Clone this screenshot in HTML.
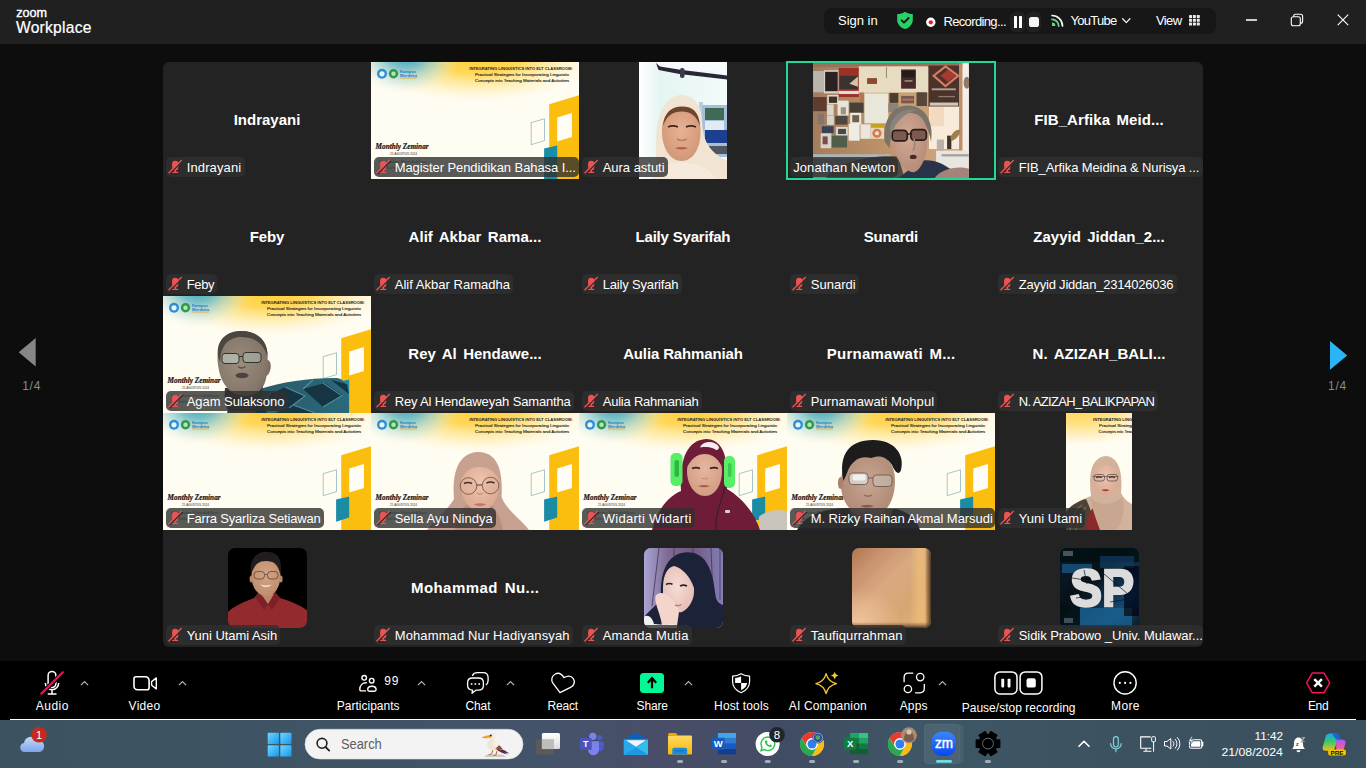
<!DOCTYPE html>
<html lang="en"><head><meta charset="utf-8"><title>Zoom Workplace</title>
<style>
*{box-sizing:border-box;margin:0;padding:0}
html,body{width:1366px;height:768px;overflow:hidden;background:#0d0d0d}
body{position:relative;font-family:"Liberation Sans",sans-serif;color:#fff;-webkit-font-smoothing:antialiased}
.abs{position:absolute}
svg{display:block;position:absolute;overflow:visible}
#topbar{position:absolute;left:0;top:0;width:1366px;height:44px;background:#202020}
#pill{position:absolute;left:824px;top:8px;width:392px;height:26px;border-radius:8px;background:#171717}
.t13{position:absolute;font-size:13px;line-height:16px;white-space:pre;color:#fff}
#grid{position:absolute;left:163px;top:62px;width:1040px;height:585px;background:#232323;border-radius:6px;overflow:hidden}
.tile{position:absolute;width:208px;height:117px;overflow:hidden}
.nm{position:absolute;left:0;width:208px;top:47px;height:22px;line-height:22px;text-align:center;font-weight:700;font-size:15px;white-space:pre;color:#fff}
.lb{position:absolute;left:3px;top:95.300px;height:20px;border-radius:5px;background:rgba(47,47,47,.8);font-size:13px;line-height:22px;white-space:pre;color:#fff;padding-left:20.700px;overflow:hidden}
.lb.nomic{padding-left:3.300px}
.lb svg{left:2px;top:2px}
.vid{position:absolute;top:0;height:117px;overflow:hidden}
.av{position:absolute;left:64.500px;top:18.400px;width:79.600px;height:79.600px;border-radius:7px;overflow:hidden}
#tb{position:absolute;left:0;top:661px;width:1366px;height:59px;background:#000}
.tl{position:absolute;top:40px;font-size:12.5px;line-height:14px;white-space:pre;color:#fff;transform:translateX(-50%)}
#wl{position:absolute;left:9.800px;top:718.800px;width:1346.400px;height:1.400px;background:#fff}
#task{position:absolute;left:0;top:720px;width:1366px;height:48px;background:#435865}
.ind{position:absolute;top:40px;width:6px;height:3px;border-radius:2px;background:#a9b2b8}
</style></head><body>
<svg width="0" height="0" style="position:absolute"><defs><filter id="pb" x="-5%" y="-5%" width="110%" height="110%"><feGaussianBlur stdDeviation=".55"/></filter><filter id="pb2" x="-5%" y="-5%" width="110%" height="110%"><feGaussianBlur stdDeviation=".35"/></filter></defs></svg>
<div id="topbar">
<div class="abs" style="left:16.2px;top:4.73px;font-size:12.6px;line-height:16px;font-weight:400;white-space:pre;color:#fff;letter-spacing:0.035px;-webkit-text-stroke:.4px #fff;">zoom</div>
<div class="abs" style="left:16px;top:19.19px;font-size:15.6px;line-height:18px;font-weight:400;white-space:pre;color:#fff;letter-spacing:0.249px;-webkit-text-stroke:.2px #fff;">Workplace</div>
<div id="pill"></div>
<div class="abs" style="left:838px;top:13.3px;font-size:13px;line-height:16px;font-weight:400;white-space:pre;color:#fff;letter-spacing:-0.009px;">Sign in</div>
<svg style="left:896px;top:11px" width="18" height="19" viewBox="0 0 18 19"><path d="M9 .7 C6.8 2.3 4 3.1 1.2 3.1 V9 c0 4.3 3.2 7.6 7.8 9.1 4.6-1.5 7.800-4.800 7.800-9.100 V3.100 C14 3.100 11.200 2.300 9 .7z" fill="#27d168"/><path d="M5.600 9.300 8 11.700 12.600 7" fill="none" stroke="#111" stroke-width="1.800" stroke-linecap="round" stroke-linejoin="round"/></svg>
<svg style="left:925px;top:16px" width="12" height="12" viewBox="0 0 12 12"><circle cx="5.800" cy="6.300" r="4.700" fill="#fff"/><circle cx="5.800" cy="6.300" r="2.100" fill="#e8173d"/></svg>
<div class="abs" style="left:943.4px;top:14.100000000000001px;font-size:13px;line-height:16px;font-weight:400;white-space:pre;color:#fff;letter-spacing:-0.634px;">Recording...</div>
<div class="abs" style="left:1010.300px;top:12px;width:14.800px;height:19.700px;border-radius:5px;background:#212121"></div>
<div class="abs" style="left:1026.300px;top:12px;width:15.200px;height:19.700px;border-radius:5px;background:#212121"></div>
<div class="abs" style="left:1013.700px;top:16px;width:3.400px;height:11.800px;background:#fff;border-radius:.6px"></div>
<div class="abs" style="left:1019px;top:16px;width:3.400px;height:11.800px;background:#fff;border-radius:.6px"></div>
<div class="abs" style="left:1029px;top:16.800px;width:10.200px;height:10.200px;background:#f6f6f8;border-radius:2.600px"></div>
<svg style="left:1051px;top:14px" width="13" height="13" viewBox="0 0 13 13"><path d="M1 1.500 A10.500 10.500 0 0 1 11.500 12" fill="none" stroke="#f2f2f2" stroke-width="1.700" stroke-linecap="round"/><path d="M1 5.300 A6.700 6.700 0 0 1 7.700 12" fill="none" stroke="#6fd08c" stroke-width="1.800" stroke-linecap="round"/><path d="M1 8.600 A3.400 3.400 0 0 1 4.400 12 L1 12z" fill="#6fd08c"/></svg>
<div class="abs" style="left:1070.4px;top:12.5px;font-size:13px;line-height:16px;font-weight:400;white-space:pre;color:#fff;letter-spacing:-0.715px;">YouTube</div>
<svg style="left:1122px;top:17.500px" width="9" height="6" viewBox="0 0 9 6"><path d="M.7.8 4.300 4.600 7.900.8" fill="none" stroke="#f0f0f0" stroke-width="1.300" stroke-linecap="round" stroke-linejoin="round"/></svg>
<div class="abs" style="left:1155.9px;top:12.5px;font-size:13px;line-height:16px;font-weight:400;white-space:pre;color:#fff;letter-spacing:-0.566px;">View</div>
<svg style="left:1188.700px;top:14.800px" width="11" height="11" viewBox="0 0 11 11"><rect x="0.0" y="0.0" width="3" height="3" rx=".6" fill="#e9e9e9"/><rect x="3.9" y="0.0" width="3" height="3" rx=".6" fill="#e9e9e9"/><rect x="7.8" y="0.0" width="3" height="3" rx=".6" fill="#e9e9e9"/><rect x="0.0" y="3.8" width="3" height="3" rx=".6" fill="#e9e9e9"/><rect x="3.9" y="3.8" width="3" height="3" rx=".6" fill="#e9e9e9"/><rect x="7.8" y="3.8" width="3" height="3" rx=".6" fill="#e9e9e9"/><rect x="0.0" y="7.6" width="3" height="3" rx=".6" fill="#e9e9e9"/><rect x="3.9" y="7.6" width="3" height="3" rx=".6" fill="#e9e9e9"/><rect x="7.8" y="7.6" width="3" height="3" rx=".6" fill="#e9e9e9"/></svg>
<div class="abs" style="left:1245.500px;top:19.200px;width:11px;height:1.700px;background:#cdcdcd"></div>
<svg style="left:1290px;top:13px" width="14" height="14" viewBox="0 0 14 14"><rect x="3.600" y="1.300" width="9" height="9" rx="2" fill="none" stroke="#fff" stroke-width="1.100"/><rect x="1.300" y="3.700" width="9" height="9" rx="2" fill="#202020" stroke="#fff" stroke-width="1.100"/></svg>
<svg style="left:1337px;top:14px" width="12" height="12" viewBox="0 0 12 12"><path d="M.7.700 11.200 11.200M11.200.7.700 11.200" stroke="#fff" stroke-width="1.100" fill="none"/></svg>
</div>
<div id="grid">
<div class="tile" style="left:0px;top:0px;"><div class="nm" style="letter-spacing:0.007px;text-indent:0.007px;">Indrayani</div><div class="lb" style="letter-spacing:0.134px;padding-right:3.200px;"><svg width="20" height="20" viewBox="0 0 20 20" style="left:0;top:0"><path d="M6.100 6.800a3.100 3.100 0 0 1 6.200 0v3.200a3.100 3.600 0 0 1-6.200 0z" fill="#f05252"/><path d="M9.200 13v2M6.200 15.400h6" stroke="#f05252" stroke-width="1.400" fill="none"/><path d="M3.500 17.100 16.700 4" stroke="#2d2d2d" stroke-width="1.400"/><path d="M2.500 16.200 15.700 3.100" stroke="#f05252" stroke-width="1.350"/></svg>Indrayani</div></div>
<div class="tile" style="left:208px;top:0px;"><svg width="208" height="117" viewBox="0 0 208 117" style="left:0px;top:0"><defs><radialGradient id="t1" cx="0" cy="0" r="1" gradientUnits="userSpaceOnUse" gradientTransform="translate(35 -8) scale(54 40)"><stop offset="0" stop-color="#2f9dc0" stop-opacity="1"/><stop offset=".35" stop-color="#63b9cc" stop-opacity=".85"/><stop offset=".7" stop-color="#b4dcdc" stop-opacity=".5"/><stop offset="1" stop-color="#e6f2e8" stop-opacity="0"/></radialGradient><radialGradient id="y1" cx="0" cy="0" r="1" gradientUnits="userSpaceOnUse" gradientTransform="translate(106 -7) scale(118 47)"><stop offset="0" stop-color="#ffcd34" stop-opacity="1"/><stop offset=".4" stop-color="#ffd652" stop-opacity=".95"/><stop offset=".72" stop-color="#ffe898" stop-opacity=".55"/><stop offset="1" stop-color="#fff4cc" stop-opacity="0"/></radialGradient></defs><rect width="208" height="117" fill="#fffcf1"/><rect width="208" height="60" fill="url(#y1)"/><rect width="120" height="50" fill="url(#t1)"/><polygon points="178.200,42.300 208,33.300 208,117 178.200,117" fill="#fcbe0e"/><polygon points="186.200,55.500 200.900,51.100 200.900,75 186.200,79.500" fill="#fffef6"/><polygon points="173.100,86.600 186.200,83.400 186.200,117 173.100,117" fill="#1b8ca6"/><polygon points="160.200,60.600 173.500,56.800 173.500,78.600 160.200,82.700" fill="none" stroke="#5f9aa6" stroke-width=".55"/><circle cx="11" cy="11.800" r="5" fill="#2a8fd6"/><circle cx="11" cy="11.800" r="2.600" fill="#e8f3fb"/><circle cx="22.500" cy="11.800" r="4.700" fill="#2f9a4d"/><circle cx="22.500" cy="11.800" r="2.200" fill="#bfe0b0"/><text x="29" y="11" font-family="Liberation Sans,sans-serif" font-weight="700" font-size="3.600" fill="#1d7fc4" textLength="16" lengthAdjust="spacingAndGlyphs">Kampus</text><text x="29" y="14.600" font-family="Liberation Sans,sans-serif" font-weight="700" font-size="3.600" fill="#1d7fc4" textLength="17" lengthAdjust="spacingAndGlyphs">Merdeka</text><rect x="29" y="15.600" width="17" height=".8" fill="#f0a020"/><g font-family="Liberation Sans,sans-serif" fill="#222" text-anchor="middle"><text x="150" y="7.700" font-size="3.700" font-weight="700" textLength="103.500" lengthAdjust="spacingAndGlyphs">INTEGRATING LINGUISTICS INTO ELT CLASSROOM:</text><text x="151" y="14" font-size="4" stroke="#222" stroke-width=".12" textLength="94" lengthAdjust="spacingAndGlyphs">Practical Strategies for Incorporating Linguistic</text><text x="151" y="19.700" font-size="4" stroke="#222" stroke-width=".12" textLength="94" lengthAdjust="spacingAndGlyphs">Concepts into Teaching Materials and Activities</text></g><text x="4.600" y="87" font-family="Liberation Serif,serif" font-style="italic" font-weight="700" font-size="7.500" fill="#151515" stroke="#151515" stroke-width=".22" textLength="53" lengthAdjust="spacingAndGlyphs">Monthly Zeminar</text><text x="32.500" y="93.200" text-anchor="middle" font-family="Liberation Sans,sans-serif" font-size="2.800" fill="#333" textLength="27" lengthAdjust="spacingAndGlyphs">21 AGUSTUS 2024</text><g font-family="Liberation Sans,sans-serif" font-size="4.200" fill="#2a7fae"><text x="8" y="101" textLength="48" lengthAdjust="spacingAndGlyphs">Magister Pendidikan</text><text x="14" y="106.500" textLength="34" lengthAdjust="spacingAndGlyphs">Bahasa Inggris</text></g></svg><div class="lb" style="letter-spacing:-0.077px;width:205px;"><svg width="20" height="20" viewBox="0 0 20 20" style="left:0;top:0"><path d="M6.100 6.800a3.100 3.100 0 0 1 6.200 0v3.200a3.100 3.600 0 0 1-6.200 0z" fill="#f05252"/><path d="M9.200 13v2M6.200 15.400h6" stroke="#f05252" stroke-width="1.400" fill="none"/><path d="M3.500 17.100 16.700 4" stroke="#2d2d2d" stroke-width="1.400"/><path d="M2.500 16.200 15.700 3.100" stroke="#f05252" stroke-width="1.350"/></svg>Magister Pendidikan Bahasa I...</div></div>
<div class="tile" style="left:416px;top:0px;"><div class="vid" style="left:60px;width:88px;background:#eef8f6"><svg width="88" height="117" viewBox="0 0 88 117" style="left:0;top:0"><defs><linearGradient id="aubg" x1="0" x2="1"><stop offset="0" stop-color="#ffffff"/><stop offset=".25" stop-color="#e4f5f2"/><stop offset="1" stop-color="#f2fbfa"/></linearGradient><radialGradient id="auf" cx=".5" cy=".42" r=".65"><stop offset="0" stop-color="#e8b293"/><stop offset="1" stop-color="#cf9474"/></radialGradient></defs><rect width="88" height="117" fill="url(#aubg)"/><g filter="url(#pb)"><rect x="18" y="0" width="70" height="9" fill="#f7fbfd"/><path d="M17 1 l2.500 7 l21 4 l47.500 5.500 v-4 l-45-5.500 l-22-3.500 z" fill="#2a2838"/><rect x="41" y="6" width="4.500" height="10" rx="2" fill="#3a3a4a"/><rect x="60" y="40" width="4" height="50" fill="#b8cde0"/><rect x="63" y="43" width="25" height="52" fill="#a6bfd9"/><rect x="66" y="46" width="19" height="12" fill="#3f6a55"/><rect x="66" y="59" width="19" height="10" fill="#e2ebf4"/><rect x="66" y="68" width="22" height="13" fill="#1d3f8f"/><rect x="68" y="84" width="20" height="8" fill="#4f5660"/><path d="M18 117 C17 95 15 70 21 52 C26 37 36 32.500 44 33 C55 34 62 42 63 58 C64 76 67 88 88 99 V117z" fill="#f1e4d3"/><path d="M23 72 C22 55 30 47 43 47 C56 47 62 55 61.500 72 C61 88 53 99 42.500 99 C32 99 24 88 23 72z" fill="url(#auf)"/><path d="M24 64 C25 50 33 44.500 43 44.500 C54 44.500 60 50 61 64 C57 53 51 49.500 43 49.500 C34 49.500 28 53 24 64z" fill="#6f452e"/><path d="M29 65 q5-2.200 10 0 M47 65 q5-2.200 10 0" stroke="#40261e" stroke-width="1.800" fill="none"/><path d="M38 77 q5 3 10 0" stroke="#b9805f" stroke-width="1.600" fill="none"/><path d="M36 86 q6.500-2 13 0 q-6.500 3-13 0z" fill="#b85a54"/><path d="M12 117 C20 104 30 99 43 100.500 C56 100 68 105 78 117z" fill="#f5eadc"/></g></svg></div><div class="lb" style="letter-spacing:-0.024px;padding-right:3.200px;"><svg width="20" height="20" viewBox="0 0 20 20" style="left:0;top:0"><path d="M6.100 6.800a3.100 3.100 0 0 1 6.200 0v3.200a3.100 3.600 0 0 1-6.200 0z" fill="#f05252"/><path d="M9.200 13v2M6.200 15.400h6" stroke="#f05252" stroke-width="1.400" fill="none"/><path d="M3.500 17.100 16.700 4" stroke="#2d2d2d" stroke-width="1.400"/><path d="M2.500 16.200 15.700 3.100" stroke="#f05252" stroke-width="1.350"/></svg>Aura astuti</div></div>
<div class="tile" style="left:624px;top:0px;"><div class="vid" style="left:26px;width:156px;background:#b98d62"><svg width="156" height="117" viewBox="0 0 156 117" style="left:0;top:0"><defs><linearGradient id="jbg" x1="0" x2="1"><stop offset="0" stop-color="#a27c5c"/><stop offset=".5" stop-color="#c1956a"/><stop offset="1" stop-color="#d4ae86"/></linearGradient><radialGradient id="jf" cx=".45" cy=".4" r=".7"><stop offset="0" stop-color="#d2aa94"/><stop offset="1" stop-color="#b08874"/></radialGradient></defs><rect width="156" height="117" fill="url(#jbg)"/><g filter="url(#pb)"><rect x="0.0" y="-0.11" width="155.85" height="5.2" fill="#94745c" /><rect x="0.16" y="9.03" width="10.72" height="21.27" fill="#b9b5ad" /><rect x="10.87" y="8.24" width="14.81" height="23.16" fill="#d9d2c8" /><rect x="12.13" y="9.82" width="12.61" height="19.38" fill="#2c2322" /><rect x="25.69" y="5.88" width="20.17" height="29.15" fill="#9b3128" /><rect x="26.63" y="13.76" width="18.28" height="13.39" fill="#3b3230" /><rect x="25.69" y="28.88" width="20.17" height="3.15" fill="#e4dcd2" /><path d="M36.4 21.64 L44.91 14.54 L44.91 24.79 z" fill="#d6c2a4"/><rect x="0.16" y="35.03" width="13.39" height="14.18" fill="#5c3e2e" /><rect x="14.34" y="32.98" width="11.03" height="9.14" fill="#ded8ce" /><rect x="15.92" y="34.56" width="8.19" height="6.3" fill="#3d302c" /><rect x="14.02" y="42.44" width="6.62" height="10.72" fill="#dcd6cc" /><rect x="24.58" y="38.65" width="11.03" height="14.81" fill="#e9e4da" /><rect x="27.73" y="45.27" width="5.2" height="7.09" fill="#9a9488" /><rect x="36.4" y="40.55" width="14.18" height="10.24" fill="#4a4038" /><rect x="46.64" y="28.73" width="4.73" height="11.03" fill="#b07850" /><rect x="4.88" y="51.58" width="6.3" height="11.03" fill="#85766c" /><rect x="14.02" y="53.47" width="6.93" height="9.45" fill="#d9d4ca" /><rect x="22.22" y="53.94" width="12.29" height="8.67" fill="#4e463e" /><rect x="37.19" y="50.79" width="11.03" height="11.82" fill="#ece8de" /><rect x="39.24" y="53.15" width="6.93" height="7.09" fill="#6c6450" /><rect x="8.82" y="64.18" width="11.82" height="7.09" fill="#3a4156" /><rect x="23.01" y="64.97" width="11.82" height="8.67" fill="#dbd6cc" /><rect x="25.06" y="66.86" width="7.88" height="5.2" fill="#4b4846" /><rect x="35.61" y="61.82" width="11.03" height="16.86" fill="#efece6" /><rect x="47.43" y="62.29" width="10.24" height="14.5" fill="#ebe6dc" /><rect x="7.72" y="71.27" width="10.56" height="14.97" fill="#d7d3cb" /><rect x="9.61" y="74.42" width="5.04" height="7.88" fill="#7a4b48" /><rect x="18.75" y="73.64" width="15.29" height="11.82" fill="#515c4b" /><rect x="45.86" y="4.3" width="69.34" height="26.16" fill="#e7dcc1" /><rect x="54.05" y="16.12" width="9.93" height="5.83" fill="#8c4a32" /><rect x="51.37" y="30.3" width="23.95" height="31.04" fill="#e9e6da" /><rect x="51.37" y="30.3" width="23.95" height="1.58" fill="#d9c8a0" /><path d="M73.43 5.09 v11.03" stroke="#9a8a60" stroke-width="1"/><rect x="88.09" y="7.45" width="14.81" height="19.22" fill="#4a2c2a" /><rect x="89.19" y="8.71" width="12.61" height="6.62" fill="#231a1a" /><rect x="91.55" y="18.48" width="7.88" height="0.95" fill="#d8c8b8" /><rect x="76.58" y="31.09" width="8.67" height="9.77" fill="#4a3c30" /><rect x="86.04" y="31.41" width="16.86" height="11.5" fill="#c9a274" /><rect x="88.09" y="33.93" width="12.92" height="7.41" fill="#6c5c5c" /><rect x="89.19" y="36.61" width="11.03" height="2.05" fill="#c86a40" /><rect x="103.53" y="30.3" width="10.4" height="13.71" fill="#54463a" /><rect x="75.32" y="41.33" width="9.93" height="8.67" fill="#8c8478" /><rect x="57.83" y="61.82" width="13.24" height="14.97" fill="#e7d7bd" /><rect x="57.83" y="61.82" width="13.24" height="3.94" fill="#c7a01f" /><circle cx="63.98" cy="71.27" r="4.600" fill="#d77c44"/><circle cx="63.98" cy="71.27" r="2" fill="#ece4dc"/><rect x="115.51" y="3.51" width="30.57" height="41.13" fill="#4b3329" /><path d="M132.52 4.3 L145.13 13.76 L132.52 24.0 L120.71 13.76 z" fill="none" stroke="#d97c62" stroke-width="2.200"/><path d="M134.89 7.77 L142.77 13.76 L134.89 20.06 L127.48 13.76 z" fill="#a63a30"/><rect x="118.66" y="26.36" width="24.11" height="1.89" fill="#b0a49a" /><rect x="125.43" y="33.93" width="16.55" height="1.26" fill="#8a7c72" /><rect x="116.77" y="40.55" width="28.36" height="3.15" fill="#cfc7bf" /><rect x="115.98" y="44.64" width="30.73" height="42.39" fill="#f8ebda" /><rect x="116.77" y="45.27" width="14.18" height="18.91" fill="#f3d9c0" /><rect x="146.08" y="1.15" width="3.47" height="91.4" fill="#bd8e6c" /><rect x="149.54" y="1.15" width="6.3" height="91.4" fill="#f3eee8" /><ellipse cx="153.8" cy="20.85" rx="3.200" ry="6" fill="#8d7b6b"/><rect x="123.07" y="88.61" width="32.78" height="18.12" fill="#e9e5e1" /><rect x="128.58" y="92.23" width="27.26" height="2.21" fill="#a0a0a0" /><rect x="134.1" y="73.64" width="4.25" height="13.39" fill="#3b3531" /><rect x="123.86" y="77.58" width="7.09" height="11.03" fill="#b9b1a9" /><path d="M137.25 75.21 q5-9 10-7 q-1 8-9 11z" fill="#a07e4a"/><rect x="0.0" y="92.23" width="77.37" height="4.73" fill="#aab5b9" /><rect x="0.0" y="96.96" width="78.95" height="19.22" fill="#7d878b" /><path d="M12.76 116.18 C22.22 100.43 56.89 92.55 85.25 94.44 L91.55 116.18 z" fill="#4b4a48"/><path d="M85.25 116.18 L107.31 98.85 C119.92 96.49 130.95 102.0 138.83 108.3 L138.83 116.18 z" fill="#2b3049"/><path d="M121.49 116.18 C127.8 106.73 145.13 103.26 155.85 106.73 V116.18 z" fill="#a5837a"/><path d="M71.86 79.94 C69.49 57.88 78.95 43.7 94.71 43.38 C110.46 43.07 121.49 57.88 118.03 79.94 C116.77 72.06 113.61 61.03 105.74 54.73 C91.55 51.58 78.95 57.88 76.58 86.24 z" fill="#7a736b"/><path d="M77.69 72.06 C78.16 57.88 86.83 50.79 96.28 50.79 C107.31 50.79 114.4 59.45 114.4 73.64 C114.88 89.39 110.46 106.73 101.01 110.2 C91.55 111.46 78.95 92.55 77.69 72.06 z" fill="url(#jf)"/><path d="M76.58 67.33 C78.95 51.58 91.55 45.27 104.16 48.11 C94.71 50.0 82.1 57.88 78.95 72.06 z" fill="#8a837b"/><rect x="79.26" y="68.44" width="15" height="10.500" rx="3.500" fill="#7c5a50" stroke="#2b1d1a" stroke-width="1.700"/><rect x="97.86" y="67.65" width="15.500" height="10.500" rx="3.500" fill="#7c5a50" stroke="#2b1d1a" stroke-width="1.700"/><path d="M94.23 72.06 h4.500" stroke="#2b1d1a" stroke-width="1.500"/><ellipse cx="100.22" cy="94.91" rx="3.400" ry="2.200" fill="#4a2a28"/><path d="M101.01 76.79 q2 6 -1 12" stroke="#a88070" stroke-width="1.600" fill="none"/></g></svg></div><div class="lb nomic" style="letter-spacing:0.047px;padding-right:3.200px;">Jonathan Newton</div></div>
<div class="tile" style="left:832px;top:0px;"><div class="nm" style="letter-spacing:0.077px;text-indent:0.077px;word-spacing:2.2px;">FIB_Arfika Meid...</div><div class="lb" style="letter-spacing:-0.111px;width:205px;"><svg width="20" height="20" viewBox="0 0 20 20" style="left:0;top:0"><path d="M6.100 6.800a3.100 3.100 0 0 1 6.200 0v3.200a3.100 3.600 0 0 1-6.200 0z" fill="#f05252"/><path d="M9.200 13v2M6.200 15.400h6" stroke="#f05252" stroke-width="1.400" fill="none"/><path d="M3.500 17.100 16.700 4" stroke="#2d2d2d" stroke-width="1.400"/><path d="M2.500 16.200 15.700 3.100" stroke="#f05252" stroke-width="1.350"/></svg>FIB_Arfika Meidina &amp; Nurisya ...</div></div>
<div class="tile" style="left:0px;top:117px;"><div class="nm" style="letter-spacing:-0.191px;text-indent:-0.191px;">Feby</div><div class="lb" style="letter-spacing:-0.329px;padding-right:3.200px;"><svg width="20" height="20" viewBox="0 0 20 20" style="left:0;top:0"><path d="M6.100 6.800a3.100 3.100 0 0 1 6.200 0v3.200a3.100 3.600 0 0 1-6.200 0z" fill="#f05252"/><path d="M9.200 13v2M6.200 15.400h6" stroke="#f05252" stroke-width="1.400" fill="none"/><path d="M3.500 17.100 16.700 4" stroke="#2d2d2d" stroke-width="1.400"/><path d="M2.500 16.200 15.700 3.100" stroke="#f05252" stroke-width="1.350"/></svg>Feby</div></div>
<div class="tile" style="left:208px;top:117px;"><div class="nm" style="letter-spacing:0.04px;text-indent:0.04px;word-spacing:2.2px;">Alif Akbar Rama...</div><div class="lb" style="letter-spacing:0.027px;padding-right:3.200px;"><svg width="20" height="20" viewBox="0 0 20 20" style="left:0;top:0"><path d="M6.100 6.800a3.100 3.100 0 0 1 6.200 0v3.200a3.100 3.600 0 0 1-6.200 0z" fill="#f05252"/><path d="M9.200 13v2M6.200 15.400h6" stroke="#f05252" stroke-width="1.400" fill="none"/><path d="M3.500 17.100 16.700 4" stroke="#2d2d2d" stroke-width="1.400"/><path d="M2.500 16.200 15.700 3.100" stroke="#f05252" stroke-width="1.350"/></svg>Alif Akbar Ramadha</div></div>
<div class="tile" style="left:416px;top:117px;"><div class="nm" style="letter-spacing:-0.2px;text-indent:-0.2px;">Laily Syarifah</div><div class="lb" style="letter-spacing:-0.168px;padding-right:3.200px;"><svg width="20" height="20" viewBox="0 0 20 20" style="left:0;top:0"><path d="M6.100 6.800a3.100 3.100 0 0 1 6.200 0v3.200a3.100 3.600 0 0 1-6.200 0z" fill="#f05252"/><path d="M9.200 13v2M6.200 15.400h6" stroke="#f05252" stroke-width="1.400" fill="none"/><path d="M3.500 17.100 16.700 4" stroke="#2d2d2d" stroke-width="1.400"/><path d="M2.500 16.200 15.700 3.100" stroke="#f05252" stroke-width="1.350"/></svg>Laily Syarifah</div></div>
<div class="tile" style="left:624px;top:117px;"><div class="nm" style="letter-spacing:-0.242px;text-indent:-0.242px;">Sunardi</div><div class="lb" style="letter-spacing:0.04px;padding-right:3.200px;"><svg width="20" height="20" viewBox="0 0 20 20" style="left:0;top:0"><path d="M6.100 6.800a3.100 3.100 0 0 1 6.200 0v3.200a3.100 3.600 0 0 1-6.200 0z" fill="#f05252"/><path d="M9.200 13v2M6.200 15.400h6" stroke="#f05252" stroke-width="1.400" fill="none"/><path d="M3.500 17.100 16.700 4" stroke="#2d2d2d" stroke-width="1.400"/><path d="M2.500 16.200 15.700 3.100" stroke="#f05252" stroke-width="1.350"/></svg>Sunardi</div></div>
<div class="tile" style="left:832px;top:117px;"><div class="nm" style="letter-spacing:-0.004px;text-indent:-0.004px;word-spacing:2.2px;">Zayyid Jiddan_2...</div><div class="lb" style="letter-spacing:-0.211px;padding-right:3.200px;"><svg width="20" height="20" viewBox="0 0 20 20" style="left:0;top:0"><path d="M6.100 6.800a3.100 3.100 0 0 1 6.200 0v3.200a3.100 3.600 0 0 1-6.200 0z" fill="#f05252"/><path d="M9.200 13v2M6.200 15.400h6" stroke="#f05252" stroke-width="1.400" fill="none"/><path d="M3.500 17.100 16.700 4" stroke="#2d2d2d" stroke-width="1.400"/><path d="M2.500 16.200 15.700 3.100" stroke="#f05252" stroke-width="1.350"/></svg>Zayyid Jiddan_2314026036</div></div>
<div class="tile" style="left:0px;top:234px;"><svg width="208" height="117" viewBox="0 0 208 117" style="left:0px;top:0"><defs><radialGradient id="t2" cx="0" cy="0" r="1" gradientUnits="userSpaceOnUse" gradientTransform="translate(35 -8) scale(54 40)"><stop offset="0" stop-color="#2f9dc0" stop-opacity="1"/><stop offset=".35" stop-color="#63b9cc" stop-opacity=".85"/><stop offset=".7" stop-color="#b4dcdc" stop-opacity=".5"/><stop offset="1" stop-color="#e6f2e8" stop-opacity="0"/></radialGradient><radialGradient id="y2" cx="0" cy="0" r="1" gradientUnits="userSpaceOnUse" gradientTransform="translate(106 -7) scale(118 47)"><stop offset="0" stop-color="#ffcd34" stop-opacity="1"/><stop offset=".4" stop-color="#ffd652" stop-opacity=".95"/><stop offset=".72" stop-color="#ffe898" stop-opacity=".55"/><stop offset="1" stop-color="#fff4cc" stop-opacity="0"/></radialGradient></defs><rect width="208" height="117" fill="#fffcf1"/><rect width="208" height="60" fill="url(#y2)"/><rect width="120" height="50" fill="url(#t2)"/><polygon points="178.200,42.300 208,33.300 208,117 178.200,117" fill="#fcbe0e"/><polygon points="186.200,55.500 200.900,51.100 200.900,75 186.200,79.500" fill="#fffef6"/><polygon points="173.100,86.600 186.200,83.400 186.200,104.500 173.100,108.800" fill="#1b8ca6"/><polygon points="160.200,60.600 173.500,56.800 173.500,78.600 160.200,82.700" fill="none" stroke="#5f9aa6" stroke-width=".55"/><circle cx="11" cy="11.800" r="5" fill="#2a8fd6"/><circle cx="11" cy="11.800" r="2.600" fill="#e8f3fb"/><circle cx="22.500" cy="11.800" r="4.700" fill="#2f9a4d"/><circle cx="22.500" cy="11.800" r="2.200" fill="#bfe0b0"/><text x="29" y="11" font-family="Liberation Sans,sans-serif" font-weight="700" font-size="3.600" fill="#1d7fc4" textLength="16" lengthAdjust="spacingAndGlyphs">Kampus</text><text x="29" y="14.600" font-family="Liberation Sans,sans-serif" font-weight="700" font-size="3.600" fill="#1d7fc4" textLength="17" lengthAdjust="spacingAndGlyphs">Merdeka</text><rect x="29" y="15.600" width="17" height=".8" fill="#f0a020"/><g font-family="Liberation Sans,sans-serif" fill="#222" text-anchor="middle"><text x="150" y="7.700" font-size="3.700" font-weight="700" textLength="103.500" lengthAdjust="spacingAndGlyphs">INTEGRATING LINGUISTICS INTO ELT CLASSROOM:</text><text x="151" y="14" font-size="4" stroke="#222" stroke-width=".12" textLength="94" lengthAdjust="spacingAndGlyphs">Practical Strategies for Incorporating Linguistic</text><text x="151" y="19.700" font-size="4" stroke="#222" stroke-width=".12" textLength="94" lengthAdjust="spacingAndGlyphs">Concepts into Teaching Materials and Activities</text></g><text x="4.600" y="87" font-family="Liberation Serif,serif" font-style="italic" font-weight="700" font-size="7.500" fill="#151515" stroke="#151515" stroke-width=".22" textLength="53" lengthAdjust="spacingAndGlyphs">Monthly Zeminar</text><text x="32.500" y="93.200" text-anchor="middle" font-family="Liberation Sans,sans-serif" font-size="2.800" fill="#333" textLength="27" lengthAdjust="spacingAndGlyphs">21 AGUSTUS 2024</text><g font-family="Liberation Sans,sans-serif" font-size="4.200" fill="#2a7fae"><text x="8" y="101" textLength="48" lengthAdjust="spacingAndGlyphs">Magister Pendidikan</text><text x="14" y="106.500" textLength="34" lengthAdjust="spacingAndGlyphs">Bahasa Inggris</text></g></svg><svg width="208" height="117" viewBox="0 0 208 117" style="left:0;top:0"><defs><linearGradient id="agsh" x1="0" x2="1"><stop offset="0" stop-color="#2f3d44"/><stop offset=".3" stop-color="#2a5a68"/><stop offset="1" stop-color="#296a7c"/></linearGradient><radialGradient id="agf" cx=".42" cy=".5" r=".7"><stop offset="0" stop-color="#9b8d7d"/><stop offset=".7" stop-color="#84776a"/><stop offset="1" stop-color="#655a50"/></radialGradient></defs><g filter="url(#pb)"><path d="M64 117 C66 106 80 98 97 93 C118 86 150 81.500 174 82 C184 83 187 96 186 117z" fill="url(#agsh)"/><path d="M104 100 l18-9 l20 9 l-16 12z M140 93 l22-6 l18 12 l-20 12z M112 117 l18-8 l22 8z M96 98 l8 19 h-16z M168 84 l16 4 l2 10z" fill="#17303e" opacity=".9"/><path d="M122 91 l20 9 M160 87 l18 12 M130 109 l22 8 M142 100 l-16 12 M180 99 l-20 12 M150 84 l-10 9 M108 96 l-4 6" fill="none" stroke="#5fa3ab" stroke-width="1.100" opacity=".75"/><path d="M66 117 C62 108 61 100 62 92 L100 88 C100 98 96 108 92 117z" fill="#3b3836"/><path d="M55.500 72 C51 48 62 35 78 35 C96 35 106 47 104.500 64 C109 64.500 109 76 103.500 80 C102 92 94 100 83 100 C69 100 58.500 90 55.500 72z" fill="url(#agf)"/><path d="M55.500 62 C52 46 62 35 78 35 C96 35 105 46 104.500 60 C100 47 92 41.500 79 41 C66 41 58 48 57 66z" fill="#4b4641"/><rect x="59" y="57.500" width="17" height="10" rx="3" fill="#b9c6b8" fill-opacity=".7" stroke="#33302e" stroke-width="1"/><rect x="80" y="56.500" width="18" height="10" rx="3" fill="#aab6aa" fill-opacity=".6" stroke="#33302e" stroke-width="1"/><path d="M76 60.500h4" stroke="#33302e" stroke-width="1"/><ellipse cx="79" cy="79.500" rx="6.500" ry="2.800" fill="#4f4240"/><path d="M75 70.500 q3.500 3 7.500 0" stroke="#5c5047" stroke-width="1.500" fill="none"/></g></svg><div class="lb" style="letter-spacing:-0.042px;padding-right:3.200px;"><svg width="20" height="20" viewBox="0 0 20 20" style="left:0;top:0"><path d="M6.100 6.800a3.100 3.100 0 0 1 6.200 0v3.200a3.100 3.600 0 0 1-6.200 0z" fill="#f05252"/><path d="M9.200 13v2M6.200 15.400h6" stroke="#f05252" stroke-width="1.400" fill="none"/><path d="M3.500 17.100 16.700 4" stroke="#2d2d2d" stroke-width="1.400"/><path d="M2.500 16.200 15.700 3.100" stroke="#f05252" stroke-width="1.350"/></svg>Agam Sulaksono</div></div>
<div class="tile" style="left:208px;top:234px;"><div class="nm" style="letter-spacing:0.023px;text-indent:0.023px;word-spacing:2.2px;">Rey Al Hendawe...</div><div class="lb" style="letter-spacing:-0.152px;padding-right:3.200px;"><svg width="20" height="20" viewBox="0 0 20 20" style="left:0;top:0"><path d="M6.100 6.800a3.100 3.100 0 0 1 6.200 0v3.200a3.100 3.600 0 0 1-6.200 0z" fill="#f05252"/><path d="M9.200 13v2M6.200 15.400h6" stroke="#f05252" stroke-width="1.400" fill="none"/><path d="M3.500 17.100 16.700 4" stroke="#2d2d2d" stroke-width="1.400"/><path d="M2.500 16.200 15.700 3.100" stroke="#f05252" stroke-width="1.350"/></svg>Rey Al Hendaweyah Samantha</div></div>
<div class="tile" style="left:416px;top:234px;"><div class="nm" style="letter-spacing:-0.144px;text-indent:-0.144px;">Aulia Rahmaniah</div><div class="lb" style="letter-spacing:-0.215px;padding-right:3.200px;"><svg width="20" height="20" viewBox="0 0 20 20" style="left:0;top:0"><path d="M6.100 6.800a3.100 3.100 0 0 1 6.200 0v3.200a3.100 3.600 0 0 1-6.200 0z" fill="#f05252"/><path d="M9.200 13v2M6.200 15.400h6" stroke="#f05252" stroke-width="1.400" fill="none"/><path d="M3.500 17.100 16.700 4" stroke="#2d2d2d" stroke-width="1.400"/><path d="M2.500 16.200 15.700 3.100" stroke="#f05252" stroke-width="1.350"/></svg>Aulia Rahmaniah</div></div>
<div class="tile" style="left:624px;top:234px;"><div class="nm" style="letter-spacing:0.239px;text-indent:0.239px;word-spacing:2.2px;">Purnamawati M...</div><div class="lb" style="letter-spacing:0.076px;padding-right:3.200px;"><svg width="20" height="20" viewBox="0 0 20 20" style="left:0;top:0"><path d="M6.100 6.800a3.100 3.100 0 0 1 6.200 0v3.200a3.100 3.600 0 0 1-6.200 0z" fill="#f05252"/><path d="M9.200 13v2M6.200 15.400h6" stroke="#f05252" stroke-width="1.400" fill="none"/><path d="M3.500 17.100 16.700 4" stroke="#2d2d2d" stroke-width="1.400"/><path d="M2.500 16.200 15.700 3.100" stroke="#f05252" stroke-width="1.350"/></svg>Purnamawati Mohpul</div></div>
<div class="tile" style="left:832px;top:234px;"><div class="nm" style="letter-spacing:0.07px;text-indent:0.07px;word-spacing:2.2px;">N. AZIZAH_BALI...</div><div class="lb" style="letter-spacing:-0.633px;padding-right:3.200px;"><svg width="20" height="20" viewBox="0 0 20 20" style="left:0;top:0"><path d="M6.100 6.800a3.100 3.100 0 0 1 6.200 0v3.200a3.100 3.600 0 0 1-6.200 0z" fill="#f05252"/><path d="M9.200 13v2M6.200 15.400h6" stroke="#f05252" stroke-width="1.400" fill="none"/><path d="M3.500 17.100 16.700 4" stroke="#2d2d2d" stroke-width="1.400"/><path d="M2.500 16.200 15.700 3.100" stroke="#f05252" stroke-width="1.350"/></svg>N. AZIZAH_BALIKPAPAN</div></div>
<div class="tile" style="left:0px;top:351px;"><svg width="208" height="117" viewBox="0 0 208 117" style="left:0px;top:0"><defs><radialGradient id="t3" cx="0" cy="0" r="1" gradientUnits="userSpaceOnUse" gradientTransform="translate(35 -8) scale(54 40)"><stop offset="0" stop-color="#2f9dc0" stop-opacity="1"/><stop offset=".35" stop-color="#63b9cc" stop-opacity=".85"/><stop offset=".7" stop-color="#b4dcdc" stop-opacity=".5"/><stop offset="1" stop-color="#e6f2e8" stop-opacity="0"/></radialGradient><radialGradient id="y3" cx="0" cy="0" r="1" gradientUnits="userSpaceOnUse" gradientTransform="translate(106 -7) scale(118 47)"><stop offset="0" stop-color="#ffcd34" stop-opacity="1"/><stop offset=".4" stop-color="#ffd652" stop-opacity=".95"/><stop offset=".72" stop-color="#ffe898" stop-opacity=".55"/><stop offset="1" stop-color="#fff4cc" stop-opacity="0"/></radialGradient></defs><rect width="208" height="117" fill="#fffcf1"/><rect width="208" height="60" fill="url(#y3)"/><rect width="120" height="50" fill="url(#t3)"/><polygon points="178.200,42.300 208,33.300 208,117 178.200,117" fill="#fcbe0e"/><polygon points="186.200,55.500 200.900,51.100 200.900,75 186.200,79.500" fill="#fffef6"/><polygon points="173.100,86.600 186.200,83.400 186.200,104.500 173.100,108.800" fill="#1b8ca6"/><polygon points="160.200,60.600 173.500,56.800 173.500,78.600 160.200,82.700" fill="none" stroke="#5f9aa6" stroke-width=".55"/><circle cx="11" cy="11.800" r="5" fill="#2a8fd6"/><circle cx="11" cy="11.800" r="2.600" fill="#e8f3fb"/><circle cx="22.500" cy="11.800" r="4.700" fill="#2f9a4d"/><circle cx="22.500" cy="11.800" r="2.200" fill="#bfe0b0"/><text x="29" y="11" font-family="Liberation Sans,sans-serif" font-weight="700" font-size="3.600" fill="#1d7fc4" textLength="16" lengthAdjust="spacingAndGlyphs">Kampus</text><text x="29" y="14.600" font-family="Liberation Sans,sans-serif" font-weight="700" font-size="3.600" fill="#1d7fc4" textLength="17" lengthAdjust="spacingAndGlyphs">Merdeka</text><rect x="29" y="15.600" width="17" height=".8" fill="#f0a020"/><g font-family="Liberation Sans,sans-serif" fill="#222" text-anchor="middle"><text x="150" y="7.700" font-size="3.700" font-weight="700" textLength="103.500" lengthAdjust="spacingAndGlyphs">INTEGRATING LINGUISTICS INTO ELT CLASSROOM:</text><text x="151" y="14" font-size="4" stroke="#222" stroke-width=".12" textLength="94" lengthAdjust="spacingAndGlyphs">Practical Strategies for Incorporating Linguistic</text><text x="151" y="19.700" font-size="4" stroke="#222" stroke-width=".12" textLength="94" lengthAdjust="spacingAndGlyphs">Concepts into Teaching Materials and Activities</text></g><text x="4.600" y="87" font-family="Liberation Serif,serif" font-style="italic" font-weight="700" font-size="7.500" fill="#151515" stroke="#151515" stroke-width=".22" textLength="53" lengthAdjust="spacingAndGlyphs">Monthly Zeminar</text><text x="32.500" y="93.200" text-anchor="middle" font-family="Liberation Sans,sans-serif" font-size="2.800" fill="#333" textLength="27" lengthAdjust="spacingAndGlyphs">21 AGUSTUS 2024</text><g font-family="Liberation Sans,sans-serif" font-size="4.200" fill="#2a7fae"><text x="8" y="101" textLength="48" lengthAdjust="spacingAndGlyphs">Magister Pendidikan</text><text x="14" y="106.500" textLength="34" lengthAdjust="spacingAndGlyphs">Bahasa Inggris</text></g></svg><div class="lb" style="letter-spacing:-0.183px;padding-right:3.200px;"><svg width="20" height="20" viewBox="0 0 20 20" style="left:0;top:0"><path d="M6.100 6.800a3.100 3.100 0 0 1 6.200 0v3.200a3.100 3.600 0 0 1-6.200 0z" fill="#f05252"/><path d="M9.200 13v2M6.200 15.400h6" stroke="#f05252" stroke-width="1.400" fill="none"/><path d="M3.500 17.100 16.700 4" stroke="#2d2d2d" stroke-width="1.400"/><path d="M2.500 16.200 15.700 3.100" stroke="#f05252" stroke-width="1.350"/></svg>Farra Syarliza Setiawan</div></div>
<div class="tile" style="left:208px;top:351px;"><svg width="208" height="117" viewBox="0 0 208 117" style="left:0px;top:0"><defs><radialGradient id="t4" cx="0" cy="0" r="1" gradientUnits="userSpaceOnUse" gradientTransform="translate(35 -8) scale(54 40)"><stop offset="0" stop-color="#2f9dc0" stop-opacity="1"/><stop offset=".35" stop-color="#63b9cc" stop-opacity=".85"/><stop offset=".7" stop-color="#b4dcdc" stop-opacity=".5"/><stop offset="1" stop-color="#e6f2e8" stop-opacity="0"/></radialGradient><radialGradient id="y4" cx="0" cy="0" r="1" gradientUnits="userSpaceOnUse" gradientTransform="translate(106 -7) scale(118 47)"><stop offset="0" stop-color="#ffcd34" stop-opacity="1"/><stop offset=".4" stop-color="#ffd652" stop-opacity=".95"/><stop offset=".72" stop-color="#ffe898" stop-opacity=".55"/><stop offset="1" stop-color="#fff4cc" stop-opacity="0"/></radialGradient></defs><rect width="208" height="117" fill="#fffcf1"/><rect width="208" height="60" fill="url(#y4)"/><rect width="120" height="50" fill="url(#t4)"/><polygon points="178.200,42.300 208,33.300 208,117 178.200,117" fill="#fcbe0e"/><polygon points="186.200,55.500 200.900,51.100 200.900,75 186.200,79.500" fill="#fffef6"/><polygon points="173.100,86.600 186.200,83.400 186.200,104.500 173.100,108.800" fill="#1b8ca6"/><polygon points="160.200,60.600 173.500,56.800 173.500,78.600 160.200,82.700" fill="none" stroke="#5f9aa6" stroke-width=".55"/><circle cx="11" cy="11.800" r="5" fill="#2a8fd6"/><circle cx="11" cy="11.800" r="2.600" fill="#e8f3fb"/><circle cx="22.500" cy="11.800" r="4.700" fill="#2f9a4d"/><circle cx="22.500" cy="11.800" r="2.200" fill="#bfe0b0"/><text x="29" y="11" font-family="Liberation Sans,sans-serif" font-weight="700" font-size="3.600" fill="#1d7fc4" textLength="16" lengthAdjust="spacingAndGlyphs">Kampus</text><text x="29" y="14.600" font-family="Liberation Sans,sans-serif" font-weight="700" font-size="3.600" fill="#1d7fc4" textLength="17" lengthAdjust="spacingAndGlyphs">Merdeka</text><rect x="29" y="15.600" width="17" height=".8" fill="#f0a020"/><g font-family="Liberation Sans,sans-serif" fill="#222" text-anchor="middle"><text x="150" y="7.700" font-size="3.700" font-weight="700" textLength="103.500" lengthAdjust="spacingAndGlyphs">INTEGRATING LINGUISTICS INTO ELT CLASSROOM:</text><text x="151" y="14" font-size="4" stroke="#222" stroke-width=".12" textLength="94" lengthAdjust="spacingAndGlyphs">Practical Strategies for Incorporating Linguistic</text><text x="151" y="19.700" font-size="4" stroke="#222" stroke-width=".12" textLength="94" lengthAdjust="spacingAndGlyphs">Concepts into Teaching Materials and Activities</text></g><text x="4.600" y="87" font-family="Liberation Serif,serif" font-style="italic" font-weight="700" font-size="7.500" fill="#151515" stroke="#151515" stroke-width=".22" textLength="53" lengthAdjust="spacingAndGlyphs">Monthly Zeminar</text><text x="32.500" y="93.200" text-anchor="middle" font-family="Liberation Sans,sans-serif" font-size="2.800" fill="#333" textLength="27" lengthAdjust="spacingAndGlyphs">21 AGUSTUS 2024</text><g font-family="Liberation Sans,sans-serif" font-size="4.200" fill="#2a7fae"><text x="8" y="101" textLength="48" lengthAdjust="spacingAndGlyphs">Magister Pendidikan</text><text x="14" y="106.500" textLength="34" lengthAdjust="spacingAndGlyphs">Bahasa Inggris</text></g></svg><svg width="208" height="117" viewBox="0 0 208 117" style="left:0;top:0"><defs><radialGradient id="sef" cx=".5" cy=".4" r=".7"><stop offset="0" stop-color="#efc4ae"/><stop offset="1" stop-color="#d9a48c"/></radialGradient></defs><g filter="url(#pb)"><path d="M56 117 C64 106 76 98 83 86 C81 62 86 40 107 39 C128 39 132 60 130.500 84 C136 98 150 106 158 117z" fill="#c7a08f"/><path d="M84 117 C86 104 90 96 96 92 L120 92 C126 98 130 106 132 117z" fill="#b58e7f"/><path d="M90 72 C90 56 98 50 108.500 50 C120 50 128 56 128 72 C128 86 120 98 109 98 C98 98 90 86 90 72z" fill="url(#sef)"/><path d="M88 70 C90 52 98 47 108.500 47 C120 47 128 52 130 70 C124 58 118 54 108.500 54 C99 54 94 58 88 70z" fill="#c7a08f"/><circle cx="97.500" cy="73" r="8.300" fill="#e2b49e" fill-opacity=".4" stroke="#7a564a" stroke-width=".9"/><circle cx="119.500" cy="72.500" r="8.300" fill="#e2b49e" fill-opacity=".4" stroke="#7a564a" stroke-width=".9"/><path d="M105.800 72 h5.400" stroke="#6a463c" stroke-width="1.100"/><path d="M93 70.500 q4-2 8 0 M115.500 70 q4-2 8 0" stroke="#4a2e28" stroke-width="1.500" fill="none"/><path d="M103 91.500 q6 -2.500 12 0 q-6 3-12 0z" fill="#b8766c"/><path d="M106 80 q3 2.500 6 0" stroke="#c8947e" stroke-width="1.300" fill="none"/></g></svg><div class="lb" style="letter-spacing:-0.004px;padding-right:3.200px;"><svg width="20" height="20" viewBox="0 0 20 20" style="left:0;top:0"><path d="M6.100 6.800a3.100 3.100 0 0 1 6.200 0v3.200a3.100 3.600 0 0 1-6.200 0z" fill="#f05252"/><path d="M9.200 13v2M6.200 15.400h6" stroke="#f05252" stroke-width="1.400" fill="none"/><path d="M3.500 17.100 16.700 4" stroke="#2d2d2d" stroke-width="1.400"/><path d="M2.500 16.200 15.700 3.100" stroke="#f05252" stroke-width="1.350"/></svg>Sella Ayu Nindya</div></div>
<div class="tile" style="left:416px;top:351px;"><svg width="208" height="117" viewBox="0 0 208 117" style="left:0px;top:0"><defs><radialGradient id="t5" cx="0" cy="0" r="1" gradientUnits="userSpaceOnUse" gradientTransform="translate(35 -8) scale(54 40)"><stop offset="0" stop-color="#2f9dc0" stop-opacity="1"/><stop offset=".35" stop-color="#63b9cc" stop-opacity=".85"/><stop offset=".7" stop-color="#b4dcdc" stop-opacity=".5"/><stop offset="1" stop-color="#e6f2e8" stop-opacity="0"/></radialGradient><radialGradient id="y5" cx="0" cy="0" r="1" gradientUnits="userSpaceOnUse" gradientTransform="translate(106 -7) scale(118 47)"><stop offset="0" stop-color="#ffcd34" stop-opacity="1"/><stop offset=".4" stop-color="#ffd652" stop-opacity=".95"/><stop offset=".72" stop-color="#ffe898" stop-opacity=".55"/><stop offset="1" stop-color="#fff4cc" stop-opacity="0"/></radialGradient></defs><rect width="208" height="117" fill="#fffcf1"/><rect width="208" height="60" fill="url(#y5)"/><rect width="120" height="50" fill="url(#t5)"/><polygon points="178.200,42.300 208,33.300 208,117 178.200,117" fill="#fcbe0e"/><polygon points="186.200,55.500 200.900,51.100 200.900,75 186.200,79.500" fill="#fffef6"/><polygon points="173.100,86.600 186.200,83.400 186.200,104.500 173.100,108.800" fill="#1b8ca6"/><polygon points="160.200,60.600 173.500,56.800 173.500,78.600 160.200,82.700" fill="none" stroke="#5f9aa6" stroke-width=".55"/><circle cx="11" cy="11.800" r="5" fill="#2a8fd6"/><circle cx="11" cy="11.800" r="2.600" fill="#e8f3fb"/><circle cx="22.500" cy="11.800" r="4.700" fill="#2f9a4d"/><circle cx="22.500" cy="11.800" r="2.200" fill="#bfe0b0"/><text x="29" y="11" font-family="Liberation Sans,sans-serif" font-weight="700" font-size="3.600" fill="#1d7fc4" textLength="16" lengthAdjust="spacingAndGlyphs">Kampus</text><text x="29" y="14.600" font-family="Liberation Sans,sans-serif" font-weight="700" font-size="3.600" fill="#1d7fc4" textLength="17" lengthAdjust="spacingAndGlyphs">Merdeka</text><rect x="29" y="15.600" width="17" height=".8" fill="#f0a020"/><g font-family="Liberation Sans,sans-serif" fill="#222" text-anchor="middle"><text x="150" y="7.700" font-size="3.700" font-weight="700" textLength="103.500" lengthAdjust="spacingAndGlyphs">INTEGRATING LINGUISTICS INTO ELT CLASSROOM:</text><text x="151" y="14" font-size="4" stroke="#222" stroke-width=".12" textLength="94" lengthAdjust="spacingAndGlyphs">Practical Strategies for Incorporating Linguistic</text><text x="151" y="19.700" font-size="4" stroke="#222" stroke-width=".12" textLength="94" lengthAdjust="spacingAndGlyphs">Concepts into Teaching Materials and Activities</text></g><text x="4.600" y="87" font-family="Liberation Serif,serif" font-style="italic" font-weight="700" font-size="7.500" fill="#151515" stroke="#151515" stroke-width=".22" textLength="53" lengthAdjust="spacingAndGlyphs">Monthly Zeminar</text><text x="32.500" y="93.200" text-anchor="middle" font-family="Liberation Sans,sans-serif" font-size="2.800" fill="#333" textLength="27" lengthAdjust="spacingAndGlyphs">21 AGUSTUS 2024</text><g font-family="Liberation Sans,sans-serif" font-size="4.200" fill="#2a7fae"><text x="8" y="101" textLength="48" lengthAdjust="spacingAndGlyphs">Magister Pendidikan</text><text x="14" y="106.500" textLength="34" lengthAdjust="spacingAndGlyphs">Bahasa Inggris</text></g></svg><svg width="208" height="117" viewBox="0 0 208 117" style="left:0;top:0"><defs><radialGradient id="wif" cx=".5" cy=".4" r=".7"><stop offset="0" stop-color="#e6b69e"/><stop offset="1" stop-color="#cf9880"/></radialGradient></defs><g filter="url(#pb)"><path d="M180 117 V104 C186 98 198 96 208 98 V117z" fill="#c9c5bd"/><path d="M73 117 C78 98 88 84 102 78 C100 52 106 27 127 26 C146 26 150 50 148 76 C162 84 176 100 181 117z" fill="#6e1f39"/><path d="M121 35 C123 27.500 136 27 140 34 C141 40 121 40 121 35z" fill="#f4ecee"/><path d="M108 58 C108 44 116 37 126 37 C137 37 143 44 143 58 C143 72 136 83 126 83 C116 83 108 72 108 58z" fill="url(#wif)"/><path d="M106 58 C106 40 116 34 126 34 C138 34 144 40 145 58 C140 46 134 41 126 41 C117 41 112 46 106 58z" fill="#6e1f39"/><rect x="91.500" y="40" width="12" height="33" rx="5" fill="#58ee68"/><rect x="95.500" y="47" width="4.500" height="17" rx="2" fill="#2fb744"/><rect x="145" y="43" width="11" height="32" rx="5" fill="#58ee68"/><rect x="149" y="50" width="3.500" height="14" rx="1.700" fill="#3cc752"/><path d="M113 55.500 q4-1.800 8 0 M131 55.500 q4-1.800 8 0" stroke="#3a2222" stroke-width="1.600" fill="none"/><path d="M119 73 q6-2 12 0 q-6 2.600-12 0z" fill="#b9504f"/><path d="M123 65 q3 2 6 0" stroke="#c08a74" stroke-width="1.200" fill="none"/><path d="M146 74 C142 90 136 100 137 117" fill="none" stroke="#2a1a20" stroke-width=".9"/><rect x="146" y="97" width="5" height="3" rx="1" fill="#d8d0d0"/></g></svg><div class="lb" style="letter-spacing:0.292px;padding-right:3.200px;"><svg width="20" height="20" viewBox="0 0 20 20" style="left:0;top:0"><path d="M6.100 6.800a3.100 3.100 0 0 1 6.200 0v3.200a3.100 3.600 0 0 1-6.200 0z" fill="#f05252"/><path d="M9.200 13v2M6.200 15.400h6" stroke="#f05252" stroke-width="1.400" fill="none"/><path d="M3.500 17.100 16.700 4" stroke="#2d2d2d" stroke-width="1.400"/><path d="M2.500 16.200 15.700 3.100" stroke="#f05252" stroke-width="1.350"/></svg>Widarti Widarti</div></div>
<div class="tile" style="left:624px;top:351px;"><svg width="208" height="117" viewBox="0 0 208 117" style="left:0px;top:0"><defs><radialGradient id="t6" cx="0" cy="0" r="1" gradientUnits="userSpaceOnUse" gradientTransform="translate(35 -8) scale(54 40)"><stop offset="0" stop-color="#2f9dc0" stop-opacity="1"/><stop offset=".35" stop-color="#63b9cc" stop-opacity=".85"/><stop offset=".7" stop-color="#b4dcdc" stop-opacity=".5"/><stop offset="1" stop-color="#e6f2e8" stop-opacity="0"/></radialGradient><radialGradient id="y6" cx="0" cy="0" r="1" gradientUnits="userSpaceOnUse" gradientTransform="translate(106 -7) scale(118 47)"><stop offset="0" stop-color="#ffcd34" stop-opacity="1"/><stop offset=".4" stop-color="#ffd652" stop-opacity=".95"/><stop offset=".72" stop-color="#ffe898" stop-opacity=".55"/><stop offset="1" stop-color="#fff4cc" stop-opacity="0"/></radialGradient></defs><rect width="208" height="117" fill="#fffcf1"/><rect width="208" height="60" fill="url(#y6)"/><rect width="120" height="50" fill="url(#t6)"/><polygon points="178.200,42.300 208,33.300 208,117 178.200,117" fill="#fcbe0e"/><polygon points="186.200,55.500 200.900,51.100 200.900,75 186.200,79.500" fill="#fffef6"/><polygon points="173.100,86.600 186.200,83.400 186.200,104.500 173.100,108.800" fill="#1b8ca6"/><polygon points="160.200,60.600 173.500,56.800 173.500,78.600 160.200,82.700" fill="none" stroke="#5f9aa6" stroke-width=".55"/><circle cx="11" cy="11.800" r="5" fill="#2a8fd6"/><circle cx="11" cy="11.800" r="2.600" fill="#e8f3fb"/><circle cx="22.500" cy="11.800" r="4.700" fill="#2f9a4d"/><circle cx="22.500" cy="11.800" r="2.200" fill="#bfe0b0"/><text x="29" y="11" font-family="Liberation Sans,sans-serif" font-weight="700" font-size="3.600" fill="#1d7fc4" textLength="16" lengthAdjust="spacingAndGlyphs">Kampus</text><text x="29" y="14.600" font-family="Liberation Sans,sans-serif" font-weight="700" font-size="3.600" fill="#1d7fc4" textLength="17" lengthAdjust="spacingAndGlyphs">Merdeka</text><rect x="29" y="15.600" width="17" height=".8" fill="#f0a020"/><g font-family="Liberation Sans,sans-serif" fill="#222" text-anchor="middle"><text x="150" y="7.700" font-size="3.700" font-weight="700" textLength="103.500" lengthAdjust="spacingAndGlyphs">INTEGRATING LINGUISTICS INTO ELT CLASSROOM:</text><text x="151" y="14" font-size="4" stroke="#222" stroke-width=".12" textLength="94" lengthAdjust="spacingAndGlyphs">Practical Strategies for Incorporating Linguistic</text><text x="151" y="19.700" font-size="4" stroke="#222" stroke-width=".12" textLength="94" lengthAdjust="spacingAndGlyphs">Concepts into Teaching Materials and Activities</text></g><text x="4.600" y="87" font-family="Liberation Serif,serif" font-style="italic" font-weight="700" font-size="7.500" fill="#151515" stroke="#151515" stroke-width=".22" textLength="53" lengthAdjust="spacingAndGlyphs">Monthly Zeminar</text><text x="32.500" y="93.200" text-anchor="middle" font-family="Liberation Sans,sans-serif" font-size="2.800" fill="#333" textLength="27" lengthAdjust="spacingAndGlyphs">21 AGUSTUS 2024</text><g font-family="Liberation Sans,sans-serif" font-size="4.200" fill="#2a7fae"><text x="8" y="101" textLength="48" lengthAdjust="spacingAndGlyphs">Magister Pendidikan</text><text x="14" y="106.500" textLength="34" lengthAdjust="spacingAndGlyphs">Bahasa Inggris</text></g></svg><svg width="208" height="117" viewBox="0 0 208 117" style="left:0;top:0"><defs><radialGradient id="rif" cx=".5" cy=".45" r=".7"><stop offset="0" stop-color="#c9a490"/><stop offset="1" stop-color="#a8846f"/></radialGradient></defs><g filter="url(#pb)"><path d="M10 117 C18 102 36 96 58 95 L110 96 C124 100 130 108 133 117z" fill="#22262e"/><path d="M62 96 h44 l-4 12 h-34z" fill="#8f6c5c"/><path d="M54 66 C52 84 62 104 82 104 C100 104 108 86 108 68 C108 50 98 40 82 40 C64 40 56 50 54 66z" fill="url(#rif)"/><path d="M56.500 68 C51 42 62 27 86 27 C108 27 118 42 114 57 C112 63 108 59 105 52 C99 43 92 42 84 45 C73 42 64 48 60 60z" fill="#1b1c1e"/><ellipse cx="53.500" cy="70" rx="2.600" ry="6" fill="#a88270"/><rect x="62" y="60" width="19" height="11.500" rx="3.500" fill="#eef4f0" fill-opacity=".55" stroke="#5a5050" stroke-width=".8"/><rect x="86" y="62" width="19" height="11.500" rx="3.500" fill="#d8dcd8" fill-opacity=".35" stroke="#5a5050" stroke-width=".8"/><rect x="65.500" y="61.500" width="13" height="6" rx="2" fill="#f4faf6" fill-opacity=".8"/><path d="M81 65h5" stroke="#5a5050" stroke-width=".8"/><path d="M73 93 q7-2 14 0 q-7 3-14 0z" fill="#8a5650"/><path d="M77 82 q4 2.500 8 0" stroke="#8f6a5a" stroke-width="1.400" fill="none"/></g></svg><div class="lb" style="letter-spacing:-0.049px;width:205px;"><svg width="20" height="20" viewBox="0 0 20 20" style="left:0;top:0"><path d="M6.100 6.800a3.100 3.100 0 0 1 6.200 0v3.200a3.100 3.600 0 0 1-6.200 0z" fill="#f05252"/><path d="M9.200 13v2M6.200 15.400h6" stroke="#f05252" stroke-width="1.400" fill="none"/><path d="M3.500 17.100 16.700 4" stroke="#2d2d2d" stroke-width="1.400"/><path d="M2.500 16.200 15.700 3.100" stroke="#f05252" stroke-width="1.350"/></svg>M. Rizky Raihan Akmal Marsudi</div></div>
<div class="tile" style="left:832px;top:351px;"><div class="vid" style="left:71px;width:66px;background:#fffdf4"><svg width="66" height="117" viewBox="0 0 66 117" style="left:0;top:0"><defs><radialGradient id="yubg" cx="0" cy="0" r="1" gradientUnits="userSpaceOnUse" gradientTransform="translate(14 -6) scale(78 38)"><stop offset="0" stop-color="#ffd452"/><stop offset=".45" stop-color="#ffe182"/><stop offset=".8" stop-color="#fff3cf"/><stop offset="1" stop-color="#fffcf1"/></radialGradient><radialGradient id="yuf" cx=".5" cy=".45" r=".7"><stop offset="0" stop-color="#ecc2ac"/><stop offset="1" stop-color="#d5a48e"/></radialGradient></defs><rect width="66" height="117" fill="#fffcf1"/><rect width="66" height="40" fill="url(#yubg)"/><g font-family="Liberation Sans,sans-serif" fill="#222"><text x="27" y="7.700" font-size="3.700" font-weight="700" textLength="55.400" lengthAdjust="spacingAndGlyphs">INTEGRATING LINGUISTICS</text><text x="33" y="14" font-size="4" stroke="#222" stroke-width=".12" textLength="38.400" lengthAdjust="spacingAndGlyphs">Practical Strategies</text><text x="32.500" y="19.700" font-size="4" stroke="#222" stroke-width=".12" textLength="42.200" lengthAdjust="spacingAndGlyphs">Concepts into Teaching</text></g><g filter="url(#pb)"><path d="M0 117 V100 C6 92 16 86 25 83 C22 60 26 44 40 43 C53 44 57 60 55 80 C58 86 62 89 66 91 V117z" fill="#d2b29b"/><path d="M0 117 V99 C5 92 12 88 20 86 C24 94 28 106 30 117z" fill="#4e4238"/><path d="M4 117 C6 104 10 96 16 92 M10 117 C12 106 16 98 20 94" stroke="#7a6a4a" stroke-width="1.200" fill="none"/><path d="M20 117 C20 104 24 96 30 93 L36 117z" fill="#8a2a2c"/><path d="M27 66 C27 55 32 49 39.500 49 C47 49 52 55 52 66 C52 75 47 82 39.500 82 C32 82 27 75 27 66z" fill="url(#yuf)"/><path d="M25.500 66 C25 51 31 45.500 39.500 45.500 C48 45.500 54 51 53.500 66 C51 56 46 52 39.500 52 C33 52 28 56 25.500 66z" fill="#d2b29b"/><path d="M26.500 63.500 h26" stroke="#5f5150" stroke-width=".7"/><rect x="28" y="61.500" width="10.500" height="6.500" rx="2.500" fill="none" stroke="#5f5150" stroke-width=".8"/><rect x="41" y="61.500" width="10.500" height="6.500" rx="2.500" fill="none" stroke="#5f5150" stroke-width=".8"/><path d="M30 64.500 q3-1.200 6 0 M43 64.500 q3-1.200 6 0" stroke="#3a2a28" stroke-width="1.100" fill="none"/><path d="M35.500 77 q4-1.500 8 0 q-4 2.600-8 0z" fill="#a83838"/><path d="M24 84 C30 92 46 94 56 84 C60 96 56 110 50 117 H34 C30 106 26 96 24 84z" fill="#c8a690"/></g></svg></div><div class="lb" style="letter-spacing:0.052px;padding-right:3.200px;"><svg width="20" height="20" viewBox="0 0 20 20" style="left:0;top:0"><path d="M6.100 6.800a3.100 3.100 0 0 1 6.200 0v3.200a3.100 3.600 0 0 1-6.200 0z" fill="#f05252"/><path d="M9.200 13v2M6.200 15.400h6" stroke="#f05252" stroke-width="1.400" fill="none"/><path d="M3.500 17.100 16.700 4" stroke="#2d2d2d" stroke-width="1.400"/><path d="M2.500 16.200 15.700 3.100" stroke="#f05252" stroke-width="1.350"/></svg>Yuni Utami</div></div>
<div class="tile" style="left:0px;top:468px;"><div class="av" style="background:#000"><svg width="80" height="80" viewBox="0 0 80 80" style="left:0;top:0"><defs><radialGradient id="yaf" cx=".5" cy=".45" r=".7"><stop offset="0" stop-color="#d3a484"/><stop offset="1" stop-color="#b98868"/></radialGradient></defs><g filter="url(#pb)"><path d="M0 80 V64 C6 58 16 54 26 50 L31 44 L47 44 L52 50 C62 53 74 58 80 63 V80z" fill="#93292f"/><path d="M27 49 L36 62 L40 56 L44 62 L52 50 L46 43 L32 43z" fill="#7c2026"/><path d="M33 46 L40 56 L46 46z" fill="#b98868"/><path d="M23.500 29 C23 16 29 9 38 9 C47 9 53 16 52.500 29 C52 40 46 48 38 48 C30 48 24 40 23.500 29z" fill="url(#yaf)"/><ellipse cx="23.200" cy="31" rx="1.600" ry="3.500" fill="#b98868"/><ellipse cx="53" cy="31" rx="1.600" ry="3.500" fill="#b98868"/><path d="M23 27 C20 6 34 3 40 4 C50 4 55 12 52.500 27 C50 16 46 13 38 13 C30 13 26 17 23 27z" fill="#211c1a"/><rect x="26" y="23.500" width="10.500" height="7.500" rx="3.200" fill="none" stroke="#5a4238" stroke-width=".8"/><rect x="39.500" y="23.500" width="10.500" height="7.500" rx="3.200" fill="none" stroke="#5a4238" stroke-width=".8"/><path d="M36.500 26.500h3" stroke="#5a4238" stroke-width=".8"/><path d="M32 36.500 q6 2 12 0 q-6 5-12 0z" fill="#f3ebe4"/></g></svg></div><div class="lb" style="letter-spacing:-0.044px;padding-right:3.200px;"><svg width="20" height="20" viewBox="0 0 20 20" style="left:0;top:0"><path d="M6.100 6.800a3.100 3.100 0 0 1 6.200 0v3.200a3.100 3.600 0 0 1-6.200 0z" fill="#f05252"/><path d="M9.200 13v2M6.200 15.400h6" stroke="#f05252" stroke-width="1.400" fill="none"/><path d="M3.500 17.100 16.700 4" stroke="#2d2d2d" stroke-width="1.400"/><path d="M2.500 16.200 15.700 3.100" stroke="#f05252" stroke-width="1.350"/></svg>Yuni Utami Asih</div></div>
<div class="tile" style="left:208px;top:468px;"><div class="nm" style="letter-spacing:0.452px;text-indent:0.452px;word-spacing:2.2px;">Mohammad Nu...</div><div class="lb" style="letter-spacing:0.122px;padding-right:3.200px;"><svg width="20" height="20" viewBox="0 0 20 20" style="left:0;top:0"><path d="M6.100 6.800a3.100 3.100 0 0 1 6.200 0v3.200a3.100 3.600 0 0 1-6.200 0z" fill="#f05252"/><path d="M9.200 13v2M6.200 15.400h6" stroke="#f05252" stroke-width="1.400" fill="none"/><path d="M3.500 17.100 16.700 4" stroke="#2d2d2d" stroke-width="1.400"/><path d="M2.500 16.200 15.700 3.100" stroke="#f05252" stroke-width="1.350"/></svg>Mohammad Nur Hadiyansyah</div></div>
<div class="tile" style="left:416px;top:468px;"><div class="av" style="background:#8d8fbd"><svg width="80" height="80" viewBox="0 0 80 80" style="left:0;top:0"><defs><linearGradient id="ambg" x1="0" x2="1"><stop offset="0" stop-color="#aaa4d4"/><stop offset=".3" stop-color="#7d6a92"/><stop offset=".6" stop-color="#6f5a80"/><stop offset="1" stop-color="#857fb8"/></linearGradient><radialGradient id="amf" cx=".45" cy=".45" r=".7"><stop offset="0" stop-color="#f6dcd4"/><stop offset="1" stop-color="#e2b8b0"/></radialGradient></defs><rect width="80" height="80" fill="url(#ambg)"/><g filter="url(#pb)"><path d="M15 0 L8 58 M30 0v8 M49 0v6 M67 0 L69 50 M76 0v52" stroke="#4a3a5c" stroke-width=".9" fill="none"/><path d="M1 68 C6 62 12 58 17 50 C16 30 20 14 32 7 C42 2 56 4 62 14 C70 26 70 40 72 50 C74 56 78 56 80 58 V80 H10z" fill="#1d2139"/><path d="M19 40 C19 26 24 19 30 18 C38 20 46 28 50 40 C51 50 46 60 38 64 C30 66 22 58 19 48z" fill="url(#amf)"/><path d="M11.500 48 C14 44 20 44 24 48 C30 52 35 58 35 64 L33 78 L18 78 C17 66 10 56 11.500 48z" fill="#f3d5cb"/><path d="M0 69 C3 66 8 68 10 76 L22 77 C26 76 30 76 33 78 V80 H0z" fill="#f3f0f0"/><path d="M22 36.500 q3-1.800 6.500-.3 M36 38 q3.500-1.800 7 0" stroke="#2a2030" stroke-width="1.700" fill="none"/><path d="M31 57 q3.500 1.500 6.500-.5" stroke="#c07a7a" stroke-width="1.500" fill="none"/></g></svg></div><div class="lb" style="letter-spacing:0.172px;padding-right:3.200px;"><svg width="20" height="20" viewBox="0 0 20 20" style="left:0;top:0"><path d="M6.100 6.800a3.100 3.100 0 0 1 6.200 0v3.200a3.100 3.600 0 0 1-6.200 0z" fill="#f05252"/><path d="M9.200 13v2M6.200 15.400h6" stroke="#f05252" stroke-width="1.400" fill="none"/><path d="M3.500 17.100 16.700 4" stroke="#2d2d2d" stroke-width="1.400"/><path d="M2.500 16.200 15.700 3.100" stroke="#f05252" stroke-width="1.350"/></svg>Amanda Mutia</div></div>
<div class="tile" style="left:624px;top:468px;"><div class="av" style="background:linear-gradient(135deg,#b0774f 0%,#c99470 22%,#d9aa80 45%,#d6a672 70%,#e4b377 100%)"><div class="abs" style="left:0;top:40px;width:50px;height:40px;background:radial-gradient(ellipse at 15% 90%,rgba(246,200,160,.85),rgba(246,200,160,0) 70%)"></div><div class="abs" style="left:58px;top:0;width:16px;height:80px;background:linear-gradient(90deg,rgba(236,188,122,0),rgba(236,188,122,.8) 60%,rgba(236,188,122,.6))"></div><div class="abs" style="left:73px;top:0;width:7px;height:80px;background:linear-gradient(90deg,rgba(60,40,20,0),rgba(60,40,20,.55) 55%,rgba(35,28,22,.95))"></div><div class="abs" style="left:0;top:74px;width:80px;height:6px;background:linear-gradient(180deg,rgba(60,40,20,0),rgba(60,40,20,.35) 50%,rgba(40,30,22,.85))"></div></div><div class="lb" style="letter-spacing:0.112px;padding-right:3.200px;"><svg width="20" height="20" viewBox="0 0 20 20" style="left:0;top:0"><path d="M6.100 6.800a3.100 3.100 0 0 1 6.200 0v3.200a3.100 3.600 0 0 1-6.200 0z" fill="#f05252"/><path d="M9.200 13v2M6.200 15.400h6" stroke="#f05252" stroke-width="1.400" fill="none"/><path d="M3.500 17.100 16.700 4" stroke="#2d2d2d" stroke-width="1.400"/><path d="M2.500 16.200 15.700 3.100" stroke="#f05252" stroke-width="1.350"/></svg>Taufiqurrahman</div></div>
<div class="tile" style="left:832px;top:468px;"><div class="av" style="background:#0a131b"><svg width="80" height="80" viewBox="0 0 80 80" style="left:0;top:0"><defs><linearGradient id="spbg" x1="0" y1="0" x2="1" y2="1"><stop offset="0" stop-color="#0b1d2c"/><stop offset=".4" stop-color="#081018"/><stop offset=".75" stop-color="#134a70"/><stop offset="1" stop-color="#0a1823"/></linearGradient></defs><rect width="80" height="80" fill="url(#spbg)"/><g filter="url(#pb)"><rect x="0" y="0" width="80" height="14" fill="#05090d" opacity=".8"/><rect x="2" y="16" width="30" height="9" fill="#1a5a86" opacity=".75"/><rect x="40" y="8" width="34" height="12" fill="#0f3f62" opacity=".7"/><rect x="20" y="60" width="52" height="18" fill="#176090" opacity=".8"/><rect x="64" y="18" width="16" height="50" fill="#05090d" opacity=".7"/><rect x="0" y="58" width="20" height="22" fill="#070d12" opacity=".75"/><rect x="3" y="3" width="10" height="5" fill="#8a9aa6" opacity=".5"/><rect x="4" y="70" width="9" height="5" fill="#7a8a96" opacity=".5"/></g><text x="42" y="58" text-anchor="middle" font-family="Liberation Sans,sans-serif" font-weight="700" font-size="52" fill="#dcdcdc" stroke="#dcdcdc" stroke-width="2.400" stroke-linejoin="miter" textLength="64" lengthAdjust="spacingAndGlyphs">SP</text><path d="M12 30 l20 3 M44 26 l24 20 M16 50 l14-2 M50 54 l18-3 M24 22 l3 14" stroke="#0a131b" stroke-width="1" opacity=".7"/></svg></div><div class="lb" style="letter-spacing:-0.044px;width:205px;"><svg width="20" height="20" viewBox="0 0 20 20" style="left:0;top:0"><path d="M6.100 6.800a3.100 3.100 0 0 1 6.200 0v3.200a3.100 3.600 0 0 1-6.200 0z" fill="#f05252"/><path d="M9.200 13v2M6.200 15.400h6" stroke="#f05252" stroke-width="1.400" fill="none"/><path d="M3.500 17.100 16.700 4" stroke="#2d2d2d" stroke-width="1.400"/><path d="M2.500 16.200 15.700 3.100" stroke="#f05252" stroke-width="1.350"/></svg>Sidik Prabowo _Univ. Mulawar...</div></div>
</div>
<div class="abs" style="left:786px;top:61px;width:210.300px;height:119px;border:2.200px solid #22d993"></div>
<svg style="left:18px;top:338px" width="18" height="29" viewBox="0 0 18 29"><polygon points="17.700,0 17.700,28.600 .7,14.300" fill="#868686"/></svg>
<svg style="left:1330px;top:341px" width="18" height="29" viewBox="0 0 18 29"><polygon points="0,0 0,28.800 17.200,14.400" fill="#2bb5f5"/></svg>
<div class="abs" style="left:22.2px;top:379.14px;font-size:12px;line-height:14px;font-weight:400;white-space:pre;color:#8a8a8a;letter-spacing:0.724px;">1/4</div>
<div class="abs" style="left:1328px;top:379.14px;font-size:12px;line-height:14px;font-weight:400;white-space:pre;color:#8a8a8a;letter-spacing:0.724px;">1/4</div>
<div id="tb">
<svg style="left:0;top:0" width="1366" height="58" viewBox="0 661 1366 58"><rect x="48.100" y="671.500" width="7.800" height="16" rx="3.900" stroke="#fff" fill="none" stroke-width="1.500"/><path d="M45.300 683 a6.700 6.700 0 0 0 13.400 0 M52 689.700 v3.800 M47.700 694 h8.800" stroke="#fff" fill="none" stroke-width="1.500"/><path d="M40.300 694.800 63.900 671.500" stroke="#000" stroke-width="4.500"/><path d="M41.400 693.600 62.800 672.300" stroke="#f8075c" stroke-width="2.300" stroke-linecap="round"/><path d="M136 676.800 h9.500 a3.600 3.600 0 0 1 3.600 3.600 v7.400 a2 2 0 0 1 -2 2 h-9.500 a3.600 3.600 0 0 1 -3.600 -3.600 v-7.400 a2 2 0 0 1 2 -2z" stroke="#fff" fill="none" stroke-width="1.600"/><path d="M151.600 681.600 156.300 677.900 v11 l-4.700-3.700z" stroke="#fff" fill="none" stroke-width="1.400" stroke-linejoin="round"/><circle cx="364.200" cy="677.800" r="2.300" stroke="#fff" fill="none" stroke-width="1.400"/><circle cx="371.700" cy="680.700" r="2.300" stroke="#fff" fill="none" stroke-width="1.400"/><path d="M366.300 682.800 c-4 0-6.500 2.800-6.500 6.600 a1.500 1.500 0 0 0 1.500 1.500 h4.200" stroke="#fff" fill="none" stroke-width="1.400" stroke-linecap="round"/><path d="M367.700 689.500 c0-2 1.800-3.200 4.200-3.200 s4.200 1.200 4.200 3.200 a1.700 1.700 0 0 1 -1.700 1.700 h-5 a1.700 1.700 0 0 1 -1.700 -1.700z" stroke="#fff" fill="none" stroke-width="1.400"/><path d="M472.500 675.400 c.8-1.900 2.800-2.800 5-2.800 h5.600 c3.200 0 5 2 5 5 v3 c0 1.800-.6 3.200-1.800 4" stroke="#fff" fill="none" stroke-width="1.300" stroke-linecap="round"/><path d="M472.500 678 h6 c3 0 4.900 2 4.900 4.800 v2.400 c0 3-2 5-5 5 h-2.500 l-3.900 3 .6-3 c-3-.3-5-2.200-5-5 v-2.400 c0-2.800 1.900-4.800 4.900-4.800z" stroke="#fff" fill="none" stroke-width="1.300" stroke-linejoin="round"/><rect x="470.800" y="683.200" width="1.600" height="1.600" fill="#fff"/><rect x="474.600" y="683.200" width="1.600" height="1.600" fill="#fff"/><rect x="478.400" y="683.200" width="1.600" height="1.600" fill="#fff"/><path d="M563.900 677.600 C561.800 674.200 558.400 672.400 555.300 674 C551.600 675.900 550.800 680 552.900 683.200 L560 692.700 L571 687.200 C574.300 685.300 575.300 681.400 573.300 678.600 C571.300 675.700 567.400 675.800 563.900 677.600 Z" stroke="#fff" fill="none" stroke-width="1.300" stroke-linejoin="round"/><rect x="640" y="673" width="24" height="20" rx="3.500" fill="#00f896"/><path d="M652 688.300 v-10 M647.800 682.700 652 678.200 656.200 682.700" stroke="#000" stroke-width="2.200" fill="none"/><path d="M741.100 673.700 c-2.600 1.500-5.400 2.300-8.500 2.500 v5.300 c0 5.300 3.300 9 8.500 11.200 c5.200-2.200 8.500-5.900 8.500-11.200 v-5.300 c-3.100-.2-5.900-1-8.500-2.500z" stroke="#fff" fill="none" stroke-width="1.200" stroke-linejoin="round"/><path d="M741.100 676.300 c-1.800 1-3.800 1.600-6 1.800 v5 h6z M741.100 683.100 h6 c-.3 3.300-2.500 5.600-6 7.200z" fill="#fff"/><path d="M826.100 673.700 C827.600 679.700 830.600 682.300 836.500 683.700 C830.600 685.100 827.600 687.800 826.100 693.700 C824.600 687.800 821.600 685.100 815.900 683.700 C821.600 682.300 824.600 679.700 826.100 673.700 Z" fill="none" stroke="#f5c935" stroke-width="1.300" stroke-linejoin="round"/><path d="M834.700 671.400 C835.300 674 836.400 675 838.800 675.500 C836.400 676 835.300 677 834.700 679.600 C834.100 677 833 676 830.600 675.500 C833 675 834.100 674 834.700 671.400 Z" fill="#f5c935"/><path d="M904.100 681.700 v-4.200 c0-2.700 1.700-4.400 4.400-4.400 h4.300 M924.300 684.300 v4 c0 2.700-1.700 4.500-4.400 4.500 h-4.400" stroke="#fff" fill="none" stroke-width="1.300" stroke-linecap="round"/><circle cx="920.200" cy="677.100" r="3.700" stroke="#fff" fill="none" stroke-width="1.300"/><circle cx="907.900" cy="689" r="3.700" stroke="#fff" fill="none" stroke-width="1.300"/><rect x="994.900" y="671.900" width="22.100" height="22" rx="5" stroke="#fff" fill="none" stroke-width="1.500"/><rect x="1020.100" y="671.900" width="21.800" height="22" rx="5" stroke="#fff" fill="none" stroke-width="1.500"/><rect x="1001.300" y="678.800" width="2.900" height="8.600" rx=".8" fill="#fff"/><rect x="1007.600" y="678.800" width="2.900" height="8.600" rx=".8" fill="#fff"/><rect x="1026.500" y="678.200" width="9.300" height="9.400" rx="2.200" fill="#fff"/><circle cx="1125.100" cy="682.900" r="11.100" stroke="#fff" fill="none" stroke-width="1.400"/><circle cx="1119.800" cy="682.900" r="1.100" fill="#fff"/><circle cx="1125.100" cy="682.900" r="1.100" fill="#fff"/><circle cx="1130.400" cy="682.900" r="1.100" fill="#fff"/><path d="M1312.800 673.100 h10.700 a1 1 0 0 1 .9 .5 l5 8.800 a1 1 0 0 1 0 1 l-5 8.800 a1 1 0 0 1 -.9 .5 h-10.700 a1 1 0 0 1 -.9 -.5 l-5-8.800 a1 1 0 0 1 0-1 l5-8.800 a1 1 0 0 1 .9-.5z" fill="none" stroke="#f4135b" stroke-width="1.500"/><path d="M1314.300 679.200 1321.900 686.700 M1321.900 679.200 1314.300 686.700" stroke="#fff" stroke-width="2.400"/></svg>
<svg style="left:79.5px;top:19px" width="9" height="7" viewBox="0 0 9 7"><path d="M.9 5.100 4.500 1.500 8.100 5.100" fill="none" stroke="#b4b4b4" stroke-width="1.200"/></svg>
<svg style="left:177.6px;top:19px" width="9" height="7" viewBox="0 0 9 7"><path d="M.9 5.100 4.500 1.500 8.100 5.100" fill="none" stroke="#b4b4b4" stroke-width="1.200"/></svg>
<svg style="left:416.5px;top:19px" width="9" height="7" viewBox="0 0 9 7"><path d="M.9 5.100 4.500 1.500 8.100 5.100" fill="none" stroke="#b4b4b4" stroke-width="1.200"/></svg>
<svg style="left:506.4px;top:19px" width="9" height="7" viewBox="0 0 9 7"><path d="M.9 5.100 4.500 1.500 8.100 5.100" fill="none" stroke="#b4b4b4" stroke-width="1.200"/></svg>
<svg style="left:684.4px;top:19px" width="9" height="7" viewBox="0 0 9 7"><path d="M.9 5.100 4.500 1.500 8.100 5.100" fill="none" stroke="#b4b4b4" stroke-width="1.200"/></svg>
<svg style="left:937.6px;top:19px" width="9" height="7" viewBox="0 0 9 7"><path d="M.9 5.100 4.500 1.500 8.100 5.100" fill="none" stroke="#b4b4b4" stroke-width="1.200"/></svg>
<div class="tl" style="left:52.3555px;top:37.74px;font-size:12px;letter-spacing:0.511px">Audio</div>
<div class="tl" style="left:144.5375px;top:37.74px;font-size:12px;letter-spacing:0.275px">Video</div>
<div class="tl" style="left:368.198px;top:37.74px;font-size:12px;letter-spacing:-0.004px">Participants</div>
<div class="tl" style="left:477.9625px;top:37.74px;font-size:12px;letter-spacing:-0.075px">Chat</div>
<div class="tl" style="left:562.68px;top:37.74px;font-size:12px;letter-spacing:-0.24px">React</div>
<div class="tl" style="left:652.233px;top:37.74px;font-size:12px;letter-spacing:-0.134px">Share</div>
<div class="tl" style="left:741.47px;top:37.74px;font-size:12px;letter-spacing:0.14px">Host tools</div>
<div class="tl" style="left:827.784px;top:37.74px;font-size:12px;letter-spacing:0.168px">AI Companion</div>
<div class="tl" style="left:913.6875px;top:37.74px;font-size:12px;letter-spacing:0.175px">Apps</div>
<div class="tl" style="left:1018.6115px;top:39.74px;font-size:12px;letter-spacing:0.023px">Pause/stop recording</div>
<div class="tl" style="left:1125.4769999999999px;top:37.74px;font-size:12px;letter-spacing:0.354px">More</div>
<div class="tl" style="left:1318.167px;top:37.74px;font-size:12px;letter-spacing:-0.266px">End</div>
<div class="abs" style="left:384.3px;top:12.84px;font-size:12px;line-height:14px;font-weight:400;white-space:pre;color:#fff;letter-spacing:0.8px;">99</div>
</div>
<div id="wl"></div>
<div id="task" style="background:linear-gradient(90deg,#3d5260 0%,#3f5464 22%,#43536a 40%,#4a4e68 48.500%,#404c63 58%,#3e5766 68%,#3c5260 81%,#3a505e 100%)">
<svg style="left:0;top:0" width="1366" height="48" viewBox="0 720 1366 48"><defs><linearGradient id="cl" x1="0" y1="0" x2="0" y2="1"><stop offset="0" stop-color="#c4d8fb"/><stop offset="1" stop-color="#7da5ea"/></linearGradient><linearGradient id="wn" x1="0" y1="0" x2="1" y2="1"><stop offset="0" stop-color="#6fd6ff"/><stop offset="1" stop-color="#1597ee"/></linearGradient><linearGradient id="fd" x1="0" y1="0" x2="0" y2="1"><stop offset="0" stop-color="#ffd862"/><stop offset="1" stop-color="#f7b707"/></linearGradient><linearGradient id="zm" x1="0" y1="0" x2="0" y2="1"><stop offset="0" stop-color="#3a86ff"/><stop offset="1" stop-color="#0846f0"/></linearGradient><linearGradient id="cp1" x1="0" y1="0" x2="0" y2="1"><stop offset="0" stop-color="#1aa6f5"/><stop offset=".45" stop-color="#36c96c"/><stop offset="1" stop-color="#f2c21a"/></linearGradient><linearGradient id="cp2" x1="0" y1="0" x2="0" y2="1"><stop offset="0" stop-color="#a35cf0"/><stop offset=".6" stop-color="#ee5fa0"/><stop offset="1" stop-color="#f59a4a"/></linearGradient><linearGradient id="tv" x1="0" y1="0" x2="0" y2="1"><stop offset="0" stop-color="#ffffff"/><stop offset="1" stop-color="#dcdcdc"/></linearGradient></defs><path d="M24.500 752 a4.600 4.600 0 0 1 -.5 -9.100 a7 7 0 0 1 13 -2.500 a5.800 5.800 0 0 1 2.500 11.600z" fill="url(#cl)"/><circle cx="39" cy="734.700" r="7.800" fill="#c42b1c"/><text x="39" y="738.600" text-anchor="middle" font-family="Liberation Sans,sans-serif" font-size="11" fill="#fff">1</text><rect x="267.7" y="732.8" width="11.200" height="11.200" rx=".8" fill="url(#wn)"/><rect x="280.3" y="732.8" width="11.200" height="11.200" rx=".8" fill="url(#wn)"/><rect x="267.7" y="745.3" width="11.200" height="11.200" rx=".8" fill="url(#wn)"/><rect x="280.3" y="745.3" width="11.200" height="11.200" rx=".8" fill="url(#wn)"/><rect x="305" y="729.300" width="218" height="29.700" rx="14.850" fill="#f3f3f3" stroke="#dadde0" stroke-width=".6"/><circle cx="322" cy="743.300" r="4.900" fill="none" stroke="#222" stroke-width="1.600"/><path d="M325.600 747 329.200 750.600" stroke="#222" stroke-width="1.800" stroke-linecap="round"/><text x="341" y="749" font-family="Liberation Sans,sans-serif" font-size="14" fill="#5c5c5c" textLength="40.700" lengthAdjust="spacingAndGlyphs">Search</text><path d="M484 757 l3-2.600 h15.500 l4 2.600z" fill="#cfcbc6"/><path d="M492.800 750.500 l-1.300 3.600 l-2.600 .6 M496.800 751.500 l-.8 3.200 l-2.400 .8" stroke="#b9714c" stroke-width="1.100" fill="none" stroke-linecap="round"/><path d="M490.200 737.800 c-.6 2.500-1.600 3.600-2.600 5 c-1.200 2.600 .4 5.400 3.400 7 c3.400 1.700 7.400 1.600 10 .8 l2.200-1 c-2.400-3.600-5.600-6.600-8.800-8 c-.6-1.200-.2-2.600 .6-4z" fill="#efe5d3"/><path d="M493 742 c3.600 .8 7.400 4 9.800 7.600 c-3 -.2-6.600-1.600-9-4.200z" fill="#f7efe2"/><path d="M495.500 748.600 c3 .6 6.500 1.300 8.500 1.300 l5.400 3.500 l-4.600-.6 l3 1.800 c-4-.4-9-2.800-12.300-6z" fill="#5c2d48"/><path d="M495.500 748.600 c2.500 .4 5.500 1 7.500 1 c-1-1.600-2.400-3.200-3.800-4.400z" fill="#8a4a38"/><circle cx="492.300" cy="735.900" r="2.900" fill="#f3ead9"/><path d="M481.300 737.800 c3-1.800 6.400-2.800 9.400-2.800 l.6 2.600 c-3.400 .6-7 .8-10 .2z" fill="#f2a41a"/><circle cx="490.800" cy="735.400" r="1" fill="#2a2030"/><rect x="536" y="739.200" width="18" height="15.300" rx="1.500" fill="#5a5a5a"/><rect x="541.900" y="733" width="18.100" height="16.100" rx="1.500" fill="url(#tv)"/><rect x="541.900" y="739.200" width="12.100" height="9.900" fill="#bdbdbd"/><circle cx="599.600" cy="737.500" r="2.600" fill="#5059c9"/><path d="M597 741.500 h6.800 v6 a4 4 0 0 1 -6.800 2.500z" fill="#5059c9"/><circle cx="592.800" cy="736.300" r="3.600" fill="#7b83eb"/><path d="M588 741.200 h11 v8 a5.500 5.500 0 0 1 -11 1z" fill="#7b83eb"/><rect x="580" y="738.100" width="11.700" height="11.600" rx="1" fill="#4b53bc"/><text x="585.850" y="747.400" text-anchor="middle" font-family="Liberation Sans,sans-serif" font-weight="700" font-size="9" fill="#fff">T</text><path d="M623.900 739.600 636 732.600 648 739.600z" fill="#0f5fb5"/><rect x="623.900" y="739.400" width="24.100" height="15.300" fill="#2aa9ea"/><path d="M626 740.300 h20 l-10 6.400z" fill="#f4f4f4"/><path d="M623.900 740 636 747.500 648 740 v14.700 h-24.100z" fill="#32bdf0"/><path d="M623.900 754.700 636 747.300 648 754.700z" fill="#1e96e0"/><path d="M623.900 740 636 747.500 623.900 754.700z" fill="#28a8ea"/><path d="M668 734.500 a1.500 1.500 0 0 1 1.500 -1.500 h6.500 l2 2.600 h-10z" fill="#e8a600"/><rect x="668" y="735.600" width="24" height="18.900" rx="1.200" fill="url(#fd)"/><path d="M672.300 754.500 v-4.700 a2 2 0 0 1 2 -2 h10.900 a2 2 0 0 1 2 2 v4.700z" fill="#1b8be0"/><rect x="675" y="750.300" width="9.500" height="1" fill="#0f6fc0"/><rect x="717.900" y="733" width="18.100" height="5.400" fill="#41a5ee"/><rect x="717.900" y="738.400" width="18.100" height="5.300" fill="#2b7cd3"/><rect x="717.900" y="743.700" width="18.100" height="5.300" fill="#185abd"/><rect x="717.900" y="749" width="18.100" height="5.300" fill="#103f91"/><rect x="712" y="737.800" width="12.600" height="12" rx="1" fill="#185abd"/><text x="718.300" y="747.400" text-anchor="middle" font-family="Liberation Sans,sans-serif" font-weight="700" font-size="9.500" fill="#fff">W</text><circle cx="767.600" cy="744" r="12" fill="#fff"/><path d="M768 737 a6.800 6.800 0 1 1 -3.600 12.600 l-3.400 1 l1-3.300 a6.800 6.800 0 0 1 6-10.300z" fill="none" stroke="#2bc04f" stroke-width="1.400"/><path d="M765 741 c0 3.500 2.600 6 6 6 l1-1.500 l-1.800-1 l-.8.800 c-1.200-.5-2-1.400-2.500-2.500 l.8-.8 l-1-1.800z" fill="#2bc04f"/><circle cx="777" cy="734.800" r="7.800" fill="#23232b"/><text x="777" y="739" text-anchor="middle" font-family="Liberation Sans,sans-serif" font-size="11.500" fill="#fff">8</text><circle cx="812" cy="744" r="11.799999999999999" fill="#fff"/><path d="M801.52 737.95 A12.1 12.1 0 0 1 822.48 737.95 L812.00 738.31 A5.69 5.69 0 0 0 807.07 746.84 Z" fill="#e53c2f"/><path d="M822.48 737.95 A12.1 12.1 0 0 1 812.00 756.10 L816.93 746.84 A5.69 5.69 0 0 0 812.00 738.31 Z" fill="#f9bd16"/><path d="M812.00 756.10 A12.1 12.1 0 0 1 801.52 737.95 L807.07 746.84 A5.69 5.69 0 0 0 816.93 746.84 Z" fill="#2ca94f"/><circle cx="812" cy="744" r="5.69" fill="#fff"/><circle cx="812" cy="744" r="4.48" fill="#2f7ff2"/><circle cx="817.900" cy="737.800" r="5.600" fill="#2a4a9a"/><circle cx="817.900" cy="737.800" r="4.600" fill="none" stroke="#c8d4f0" stroke-width=".6"/><circle cx="817.900" cy="737.600" r="2.400" fill="#4fa85a"/><rect x="850" y="733" width="9" height="5.400" fill="#21a366"/><rect x="859" y="733" width="9.100" height="5.400" fill="#33c481"/><rect x="850" y="738.400" width="9" height="5.300" fill="#107c41"/><rect x="859" y="738.400" width="9.100" height="5.300" fill="#21a366"/><rect x="850" y="743.700" width="9" height="5.300" fill="#185c37"/><rect x="859" y="743.700" width="9.100" height="5.300" fill="#107c41"/><rect x="850" y="749" width="18.100" height="5.300" fill="#185c37"/><rect x="844" y="737.800" width="12.500" height="12" rx="1" fill="#107c41"/><text x="850.250" y="747.400" text-anchor="middle" font-family="Liberation Sans,sans-serif" font-weight="700" font-size="9.500" fill="#fff">X</text><circle cx="899.9" cy="744" r="11.799999999999999" fill="#fff"/><path d="M889.42 737.95 A12.1 12.1 0 0 1 910.38 737.95 L899.90 738.31 A5.69 5.69 0 0 0 894.97 746.84 Z" fill="#e53c2f"/><path d="M910.38 737.95 A12.1 12.1 0 0 1 899.90 756.10 L904.83 746.84 A5.69 5.69 0 0 0 899.90 738.31 Z" fill="#f9bd16"/><path d="M899.90 756.10 A12.1 12.1 0 0 1 889.42 737.95 L894.97 746.84 A5.69 5.69 0 0 0 904.83 746.84 Z" fill="#2ca94f"/><circle cx="899.9" cy="744" r="5.69" fill="#fff"/><circle cx="899.9" cy="744" r="4.48" fill="#2f7ff2"/><circle cx="908.900" cy="735.300" r="8" fill="#a78c76"/><path d="M904 740 c0-5 2-9 5-9 s5 4 5 9 a8 8 0 0 1 -10 0z" fill="#7a5c48"/><circle cx="909" cy="732" r="2.600" fill="#d8c4b0"/><rect x="929" y="724.500" width="34.700" height="39" rx="4" fill="#48606e"/><rect x="924.300" y="724.200" width="35" height="39.400" rx="4" fill="#4c6472" stroke="#5a7280" stroke-width=".6"/><rect x="931.900" y="731.800" width="24.100" height="24.300" rx="9.500" fill="url(#zm)"/><text x="934.900" y="747.700" font-family="Liberation Sans,sans-serif" font-weight="400" font-size="15.500" fill="#fff" stroke="#fff" stroke-width=".5" textLength="18" lengthAdjust="spacingAndGlyphs">zm</text><rect x="936" y="760" width="16" height="2.800" rx="1.400" fill="#6fdce0"/><polygon points="990.74,731.71 996.92,735.28 995.15,737.81 996.59,740.30 999.67,740.03 999.67,747.17 996.59,746.90 995.15,749.39 996.92,751.92 990.74,755.49 989.44,752.69 986.56,752.69 985.26,755.49 979.08,751.92 980.85,749.39 979.41,746.90 976.33,747.17 976.33,740.03 979.41,740.30 980.85,737.81 979.08,735.28 985.26,731.71 986.56,734.51 989.44,734.51" fill="#000" stroke="#000" stroke-width="1.500" stroke-linejoin="round"/><circle cx="988" cy="743.6" r="5.400" fill="#000" stroke="#5a7080" stroke-width="1"/><rect x="677" y="760" width="6.100" height="3" rx="1.500" fill="#a3adb6"/><rect x="721" y="760" width="6.100" height="3" rx="1.500" fill="#a3adb6"/><rect x="764.7" y="760" width="6.100" height="3" rx="1.500" fill="#a3adb6"/><rect x="809" y="760" width="6.100" height="3" rx="1.500" fill="#a3adb6"/><rect x="853" y="760" width="6.100" height="3" rx="1.500" fill="#a3adb6"/><rect x="897.1" y="760" width="6.100" height="3" rx="1.500" fill="#a3adb6"/><rect x="984.9" y="760" width="6.100" height="3" rx="1.500" fill="#a3adb6"/><path d="M1079 746.300 1084 741.300 1089 746.300" fill="none" stroke="#fff" stroke-width="1.600" stroke-linecap="round" stroke-linejoin="round"/><rect x="1113.500" y="736.600" width="4.800" height="10.400" rx="2.400" fill="none" stroke="#7fd4dc" stroke-width="1.200"/><path d="M1110.600 743.600 a5.300 5.300 0 0 0 10.600 0 M1115.900 749 v2.700" fill="none" stroke="#7fd4dc" stroke-width="1.200" stroke-linecap="round"/><path d="M1151.300 748.300 h-10.600 v-11.400 h10" fill="none" stroke="#fff" stroke-width="1.100"/><path d="M1146 748.500 v2.600 M1143.400 751.300 h8" stroke="#fff" stroke-width="1.100"/><rect x="1151.700" y="736.700" width="3.700" height="5" rx=".8" fill="none" stroke="#fff" stroke-width="1"/><path d="M1153.600 741.700 v10" stroke="#fff" stroke-width="1"/><path d="M1164.500 741.500 h2.500 l3.800-3 v10.500 l-3.800-3 h-2.500z" fill="none" stroke="#fff" stroke-width="1" stroke-linejoin="round"/><path d="M1173 741.300 a3.400 3.400 0 0 1 0 5 M1175.200 739.300 a6.200 6.200 0 0 1 0 9 M1177.400 737.500 a8.800 8.800 0 0 1 0 12.600" fill="none" stroke="#fff" stroke-width="1" stroke-linecap="round"/><rect x="1189.500" y="739.800" width="12.300" height="8.400" rx="1.800" fill="none" stroke="#fff" stroke-width="1.100"/><rect x="1191" y="741.300" width="9.300" height="5.400" rx=".6" fill="#fff"/><path d="M1202.600 742.300 v3.400" stroke="#fff" stroke-width="1.400" stroke-linecap="round"/><path d="M1191.500 736.500 l-3 5 h2.600 l-1.300 4 l4-5.500 h-2.600 l1.300-3.500z" fill="#fff" stroke="#3c5260" stroke-width=".6"/><g font-family="Liberation Sans,sans-serif" font-size="11.800" fill="#fff" text-anchor="end"><text x="1282.900" y="739.900" textLength="28.400" lengthAdjust="spacingAndGlyphs">11:42</text><text x="1282.900" y="755.500" textLength="61.500" lengthAdjust="spacingAndGlyphs">21/08/2024</text></g><path d="M1292 749 c1.500-1.200 2-3 2-5.500 c0-3.600 1.800-6 4.500-6 s4.500 2.400 4.500 6 c0 2.500 .5 4.300 2 5.500z" fill="#fff"/><path d="M1296.500 750.200 a2 2 0 0 0 4 0z" fill="#fff"/><text x="1295.800" y="746.300" font-family="Liberation Sans,sans-serif" font-weight="700" font-size="6" fill="#3c5260">z</text><text x="1300.800" y="741.800" font-family="Liberation Sans,sans-serif" font-weight="700" font-size="7" fill="#fff" stroke="#3c5260" stroke-width=".3">Z</text><path d="M1326 735.500 c1-1.500 2.500-2 4.500-2 h5 c2.500 0 3.800 1.200 3 3.500 l-3.500 10.500 c-.8 2.200-2.400 3.300-4.800 3.300 h-4.200 c-2.800 0-4-1.600-3.200-4 z" fill="url(#cp1)"/><path d="M1336 739.500 h5.500 c3.200 0 4.700 1.600 3.900 4.200 l-2 6.300 c-.8 2.300-2.500 3.400-5 3.400 h-6 c2 0 3.200-1 3.900-3z" fill="url(#cp2)"/><path d="M1332 733.500 h4 c2 0 3 1.200 3.600 3 l.9 3 h-4.500z" fill="#1467d8"/><rect x="1328.200" y="749.400" width="17.700" height="6.200" rx="2" fill="#f8c500"/><text x="1337.050" y="754.700" text-anchor="middle" font-family="Liberation Sans,sans-serif" font-weight="700" font-size="5.800" fill="#111" textLength="13" lengthAdjust="spacingAndGlyphs">PRE</text></svg>
</div>
</body></html>
